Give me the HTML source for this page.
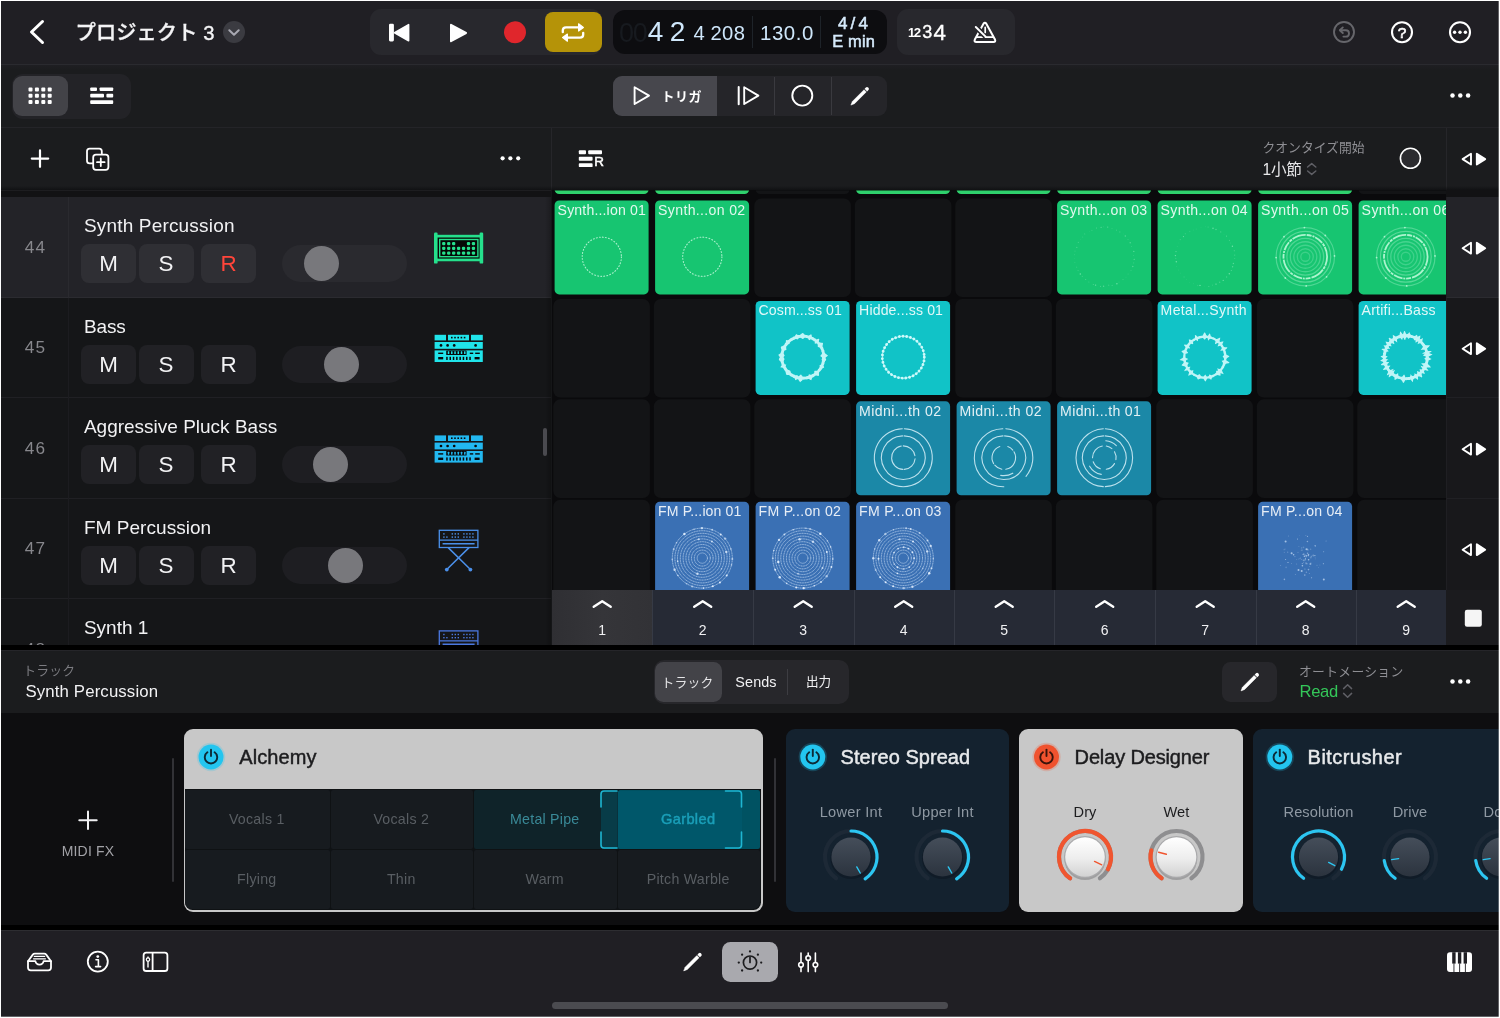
<!DOCTYPE html>
<html lang="ja"><head><meta charset="utf-8"><title>プロジェクト 3</title>
<style>
html,body{margin:0;padding:0;}
body{width:1500px;height:1018px;overflow:hidden;background:#201f24;font-family:"Liberation Sans","Noto Sans CJK JP",sans-serif;-webkit-font-smoothing:antialiased;}
#app{position:relative;width:1500px;height:1018px;overflow:hidden;background:#201f24;will-change:transform;}
.t{will-change:opacity;}
.a{position:absolute;box-sizing:border-box;}
.t{white-space:nowrap;line-height:1.2;}
.j{font-family:"Liberation Sans","Noto Sans CJK JP",sans-serif;}
svg{position:absolute;left:0;top:0;overflow:visible;}
</style></head>
<body>
<div id="app">
<div class="a" style="left:0px;top:0px;width:1500px;height:64px;background:#201f24;"></div>
<div class="a" style="left:0px;top:64px;width:1500px;height:126px;background:#1b1c1e;"></div>
<div class="a" style="left:0;top:64px;width:1500px;height:6px;background:linear-gradient(to bottom,#2a2a2f 0,#2a2a2f 1px,#1e1e22 1.5px,#1b1c1e 6px)"></div>
<div class="a" style="left:0px;top:127px;width:1500px;height:1px;background:#242428;"></div>
<div class="a" style="left:0px;top:190px;width:552px;height:456px;background:#151618;"></div>
<div class="a" style="left:552px;top:190px;width:894px;height:456px;background:#0a0a0c;"></div>
<div class="a" style="left:1446px;top:190px;width:54px;height:456px;background:#17171a;"></div>
<div class="a t j" style="left:75.6px;top:21.0px;font-size:20.2px;color:#f4f4f6;font-weight:500;letter-spacing:0.12px;line-height:24px;-webkit-text-stroke:0.35px #f4f4f6;">プロジェクト 3</div>
<div class="a" style="left:370px;top:9px;width:232px;height:46px;background:#28282d;border-radius:11px;"></div>
<div class="a" style="left:545px;top:12px;width:56.5px;height:40px;background:#b59308;border-radius:8px;"></div>
<div class="a" style="left:613px;top:10px;width:274px;height:44px;background:#0d0d10;border-radius:12px;"></div>
<div class="a t " style="left:619px;top:16.64px;font-size:27px;color:#171a1f;letter-spacing:-1.2px;line-height:32px;">00</div>
<div class="a t " style="left:647.8px;top:15.3px;font-size:28px;color:#cfe7fb;line-height:34px;">4</div>
<div class="a t " style="left:669.8px;top:15.3px;font-size:28px;color:#cfe7fb;line-height:34px;">2</div>
<div class="a t " style="left:693.4px;top:21.0px;font-size:20.2px;color:#cfe7fb;line-height:24px;">4</div>
<div class="a t " style="left:710.4px;top:21.0px;font-size:20.2px;color:#cfe7fb;letter-spacing:0.45px;line-height:24px;">208</div>
<div class="a" style="left:752px;top:16px;width:1px;height:32px;background:#1e2329;"></div>
<div class="a t " style="left:760px;top:20.93px;font-size:20.4px;color:#cfe7fb;letter-spacing:0.55px;line-height:24px;">130.0</div>
<div class="a" style="left:820px;top:16px;width:1px;height:32px;background:#1e2329;"></div>
<div class="a t " style="left:704.6px;top:13.51px;font-size:17px;color:#d6eafb;letter-spacing:3.2px;width:300px;text-align:center;line-height:20px;-webkit-text-stroke:0.5px #d6eafb;">4/4</div>
<div class="a t " style="left:703.6px;top:31.32px;font-size:16.4px;color:#d6eafb;letter-spacing:0.2px;width:300px;text-align:center;line-height:20px;-webkit-text-stroke:0.5px #d6eafb;">E min</div>
<div class="a" style="left:897px;top:9px;width:118px;height:46px;background:#28282d;border-radius:11px;"></div>
<div class="a t" style="left:0;top:0;width:0;height:0;color:#fff"><span class="a" style="left:908.0px;top:25.62px;font-size:12.65px;line-height:15px;font-weight:700;-webkit-text-stroke:0px #fff">1</span><span class="a" style="left:913.8px;top:24.98px;font-size:13.33px;line-height:16px;font-weight:700;-webkit-text-stroke:0px #fff">2</span><span class="a" style="left:922.2px;top:21.48px;font-size:17.96px;line-height:22px;font-weight:400;-webkit-text-stroke:0.4px #fff">3</span><span class="a" style="left:933.4px;top:19.17px;font-size:22.31px;line-height:27px;font-weight:400;-webkit-text-stroke:0.4px #fff">4</span></div>
<div class="a t " style="left:1252px;top:22.73px;font-size:15.5px;color:#fff;width:300px;text-align:center;line-height:19px;-webkit-text-stroke:0.6px #fff;">?</div>
<div class="a" style="left:11.5px;top:73.5px;width:119.5px;height:45px;background:#232327;border-radius:11px;"></div>
<div class="a" style="left:13px;top:75.5px;width:55px;height:40.5px;background:#434348;border-radius:9px;"></div>
<div class="a" style="left:613px;top:76px;width:274px;height:40px;background:#252529;border-radius:9px;"></div>
<div class="a" style="left:613px;top:76px;width:104px;height:40px;background:#47474d;border-radius:9px 0 0 9px"></div>
<div class="a" style="left:774px;top:77px;width:1px;height:38px;background:#3a3a3f;"></div>
<div class="a" style="left:830.5px;top:77px;width:1px;height:38px;background:#3a3a3f;"></div>
<div class="a t j" style="left:661.4px;top:88.9px;font-size:13px;color:#fff;font-weight:700;letter-spacing:0.6px;line-height:16px;">トリガ</div>
<div class="a" style="left:551px;top:128px;width:1px;height:62px;background:#26262a;"></div>
<div class="a t " style="left:594.2px;top:154.36px;font-size:13.4px;color:#fff;line-height:16px;-webkit-text-stroke:0.5px #fff;">R</div>
<div class="a t j" style="left:1262.5px;top:140.26px;font-size:12.8px;color:#8e8e93;line-height:15px;">クオンタイズ開始</div>
<div class="a t j" style="left:1262.5px;top:159.69px;font-size:15.6px;color:#e8e8ea;letter-spacing:-0.2px;line-height:19px;">1小節</div>
<div class="a" style="left:1446px;top:128px;width:1px;height:62px;background:#26262a;"></div>
<div class="a" style="left:0;top:186px;width:1500px;height:4px;background:linear-gradient(to bottom,rgba(10,10,12,0),rgba(10,10,12,0.6))"></div>
<svg width="1500" height="1018" viewBox="0 0 1500 1018" aria-hidden="true"><path d="M42.5 21.5 L31.5 32 L42.5 42.5" fill="none" stroke="#fff" stroke-width="3" stroke-linecap="round" stroke-linejoin="round"/><circle cx="234" cy="32" r="11" fill="#3b3b41"/><path d="M229.3 30.2 L234 34.8 L238.7 30.2" fill="none" stroke="#a9a9b2" stroke-width="2" stroke-linecap="round" stroke-linejoin="round"/><rect x="389" y="23.8" width="4.9" height="17.6" rx="1.3" fill="#fff"/><path d="M408.6 24.6 L408.6 40.8 L394.6 32.7 Z" fill="#fff" stroke="#fff" stroke-width="1.6" stroke-linejoin="round"/><path d="M451 24.8 L466 33 L451 41.2 Z" fill="#fff" stroke="#fff" stroke-width="2" stroke-linejoin="round"/><circle cx="515" cy="32.3" r="11" fill="#e0262c"/><g fill="none" stroke="#fff" stroke-width="2.3" stroke-linecap="round" stroke-linejoin="round"><path d="M562.8 32.2 L562.8 30.6 Q562.8 27.4 566 27.4 L578 27.4"/><path d="M583.2 32.8 L583.2 34.4 Q583.2 37.6 580 37.6 L568 37.6"/></g><g fill="#fff" stroke="#fff" stroke-width="1.2" stroke-linejoin="round"><path d="M578.6 23.8 L583.4 27.4 L578.6 31 Z"/><path d="M567.4 34 L562.6 37.6 L567.4 41.2 Z"/></g><g fill="none" stroke="#fff" stroke-width="2" stroke-linecap="round" stroke-linejoin="round"><path d="M983.5 23.7 Q984.9 21.9 986.3 23.7 L995 39.6 Q996 42 993.4 42 L976.4 42 Q973.8 42 974.8 39.6 Z"/><path d="M976.6 37.2 L993.2 37.2" stroke-width="1.7"/><path d="M977.2 28.4 L985.6 36.6" stroke="#28282d" stroke-width="5" stroke-linecap="butt"/><path d="M975.8 27 L985.6 36.6"/><path d="M985.2 27.4 L985.2 32.4" stroke-width="1.7"/></g><g fill="none" stroke="#66666b" stroke-width="1.9" stroke-linecap="round" stroke-linejoin="round"><circle cx="1344" cy="32" r="10"/><path d="M1340.2 30.2 L1345.8 30.2 Q1349 30.2 1349 33.4 Q1349 36.6 1345.8 36.6 L1343.4 36.6"/><path d="M1342.8 27.4 L1339.8 30.2 L1342.8 33"/></g><circle cx="1402" cy="32.2" r="10" fill="none" stroke="#fff" stroke-width="2.1"/><circle cx="1460" cy="32.2" r="10" fill="none" stroke="#fff" stroke-width="2.1"/><circle cx="1454.6" cy="32.2" r="1.7" fill="#fff"/><circle cx="1460" cy="32.2" r="1.7" fill="#fff"/><circle cx="1465.4" cy="32.2" r="1.7" fill="#fff"/><rect x="28.5" y="87.4" width="4" height="4" rx="1" fill="#fff"/><rect x="34.9" y="87.4" width="4" height="4" rx="1" fill="#fff"/><rect x="41.3" y="87.4" width="4" height="4" rx="1" fill="#fff"/><rect x="47.7" y="87.4" width="4" height="4" rx="1" fill="#fff"/><rect x="28.5" y="93.7" width="4" height="4" rx="1" fill="#fff"/><rect x="34.9" y="93.7" width="4" height="4" rx="1" fill="#fff"/><rect x="41.3" y="93.7" width="4" height="4" rx="1" fill="#fff"/><rect x="47.7" y="93.7" width="4" height="4" rx="1" fill="#fff"/><rect x="28.5" y="100.0" width="4" height="4" rx="1" fill="#fff"/><rect x="34.9" y="100.0" width="4" height="4" rx="1" fill="#fff"/><rect x="41.3" y="100.0" width="4" height="4" rx="1" fill="#fff"/><rect x="47.7" y="100.0" width="4" height="4" rx="1" fill="#fff"/><g fill="#fff"><rect x="90.2" y="87.4" width="6.8" height="3.6" rx="0.9"/><rect x="99.6" y="87.4" width="13.6" height="3.6" rx="0.9"/><rect x="90.2" y="93.8" width="13.8" height="3.6" rx="0.9"/><rect x="106.4" y="93.8" width="6.8" height="3.6" rx="0.9"/><rect x="90.2" y="100.2" width="23" height="3.8" rx="0.9"/></g><path d="M634.6 87.2 L649 95.6 L634.6 104 Z" fill="none" stroke="#fff" stroke-width="1.9" stroke-linejoin="round"/><path d="M738.7 87 L738.7 104.2" stroke="#fff" stroke-width="2" stroke-linecap="round"/><path d="M744.2 87.2 L758.4 95.6 L744.2 104 Z" fill="none" stroke="#fff" stroke-width="1.9" stroke-linejoin="round"/><circle cx="802.3" cy="95.6" r="10" fill="none" stroke="#fff" stroke-width="1.9"/><g transform="translate(850.9 105.10000000000001) rotate(-45) scale(1.0)" fill="#fff"><path d="M0 0 L3.6 -1.55 L20.2 -1.55 L20.2 1.55 L3.6 1.55 Z" stroke="#fff" stroke-width="0.5" stroke-linejoin="round"/><path d="M21.2 -1.8 L23 -1.8 Q24.6 -1.8 24.6 -0.2 L24.6 0.2 Q24.6 1.8 23 1.8 L21.2 1.8 Z"/></g><circle cx="1452.5" cy="95.4" r="2.25" fill="#fff"/><circle cx="1460.3" cy="95.4" r="2.25" fill="#fff"/><circle cx="1468.1" cy="95.4" r="2.25" fill="#fff"/><path d="M40 150.4 L40 166.8 M31.8 158.6 L48.2 158.6" stroke="#fff" stroke-width="2.2" stroke-linecap="round"/><g fill="none" stroke="#fff" stroke-width="1.8" stroke-linejoin="round" stroke-linecap="round"><path d="M92.6 163.4 L89.6 163.4 Q87 163.4 87 160.8 L87 151.2 Q87 148.6 89.6 148.6 L99.2 148.6 Q101.8 148.6 101.8 151.2 L101.8 154"/><rect x="93.2" y="154.6" width="15.2" height="15.2" rx="2.8"/><path d="M100.8 158.4 L100.8 166 M97 162.2 L104.6 162.2"/></g><circle cx="502.6" cy="158.3" r="2.1" fill="#fff"/><circle cx="510.4" cy="158.3" r="2.1" fill="#fff"/><circle cx="518.2" cy="158.3" r="2.1" fill="#fff"/><g fill="#fff"><rect x="578.8" y="150.3" width="7.2" height="3.9" rx="0.9"/><rect x="588.2" y="150.3" width="13.8" height="3.9" rx="0.9"/><rect x="578.8" y="156.8" width="13.8" height="3.9" rx="0.9"/><rect x="578.8" y="163.2" width="13.8" height="3.9" rx="0.9"/></g><path d="M1307.6 167 L1311.7 163.6 L1315.8 167 M1307.6 171 L1311.7 174.4 L1315.8 171" fill="none" stroke="#5f5f65" stroke-width="1.5" stroke-linecap="round" stroke-linejoin="round"/><circle cx="1410.4" cy="158.3" r="10" fill="#2b2b2f" stroke="#fff" stroke-width="1.6"/><path d="M1471.0 153.7 L1471.0 164.5 L1462.6 159.1 Z" fill="none" stroke="#fff" stroke-width="1.9" stroke-linejoin="round"/><path d="M1476.8 153.7 L1476.8 164.5 L1485.2 159.1 Z" fill="#fff" stroke="#fff" stroke-width="1.9" stroke-linejoin="round"/></svg>
<div class="a" style="left:0px;top:190px;width:551px;height:7px;background:#121214;"></div>
<div class="a" style="left:0px;top:190px;width:551px;height:1px;background:#1d1d20;"></div>
<div class="a" style="left:1446px;top:190px;width:54px;height:7px;background:#121214;"></div>
<div class="a" style="left:0;top:190px;width:1500px;height:455px;overflow:hidden">
<div class="a" style="left:0;top:7.0px;width:551px;height:100.5px;background:#232328;border-bottom:1px solid #2b2b30"></div>
<div class="a" style="left:68px;top:7.0px;width:1px;height:100.5px;background:#2a2a2f"></div>
<div class="a" style="left:1446px;top:7.0px;width:54px;height:100.5px;background:#232328;border-bottom:1px solid #2b2b30;border-left:1px solid #1f1f23"></div>
<div class="a t " style="left:1.4px;top:46.94px;font-size:17.2px;color:#87878c;letter-spacing:1.2px;width:68px;text-align:center;line-height:21px;">44</div>
<div class="a t " style="left:83.9px;top:24.32px;font-size:19px;color:#f2f2f4;letter-spacing:0.18px;line-height:23px;">Synth Percussion</div>
<div class="a t" style="left:81px;top:54.0px;width:55px;height:39px;border-radius:8px;background:#2f2f34;color:#f2f2f4;font-size:22.4px;line-height:40px;text-align:center">M</div>
<div class="a t" style="left:138.5px;top:54.0px;width:55px;height:39px;border-radius:8px;background:#2f2f34;color:#f2f2f4;font-size:22.4px;line-height:40px;text-align:center">S</div>
<div class="a t" style="left:201px;top:54.0px;width:55px;height:39px;border-radius:8px;background:#2f2f34;color:#ff453a;font-size:22.4px;line-height:40px;text-align:center">R</div>
<div class="a" style="left:282px;top:55.0px;width:125px;height:37px;border-radius:18.5px;background:#2a2a2f"></div>
<div class="a" style="left:304.0px;top:56.0px;width:35px;height:35px;border-radius:50%;background:#78787c"></div>
<div class="a" style="left:0;top:107.5px;width:551px;height:100.5px;background:#151618;border-bottom:1px solid #202024"></div>
<div class="a" style="left:68px;top:107.5px;width:1px;height:100.5px;background:#1c1c20"></div>
<div class="a" style="left:1446px;top:107.5px;width:54px;height:100.5px;background:#18181b;border-bottom:1px solid #202024;border-left:1px solid #1f1f23"></div>
<div class="a t " style="left:1.4px;top:147.44px;font-size:17.2px;color:#87878c;letter-spacing:1.2px;width:68px;text-align:center;line-height:21px;">45</div>
<div class="a t " style="left:83.9px;top:124.82px;font-size:19px;color:#f2f2f4;letter-spacing:-0.1px;line-height:23px;">Bass</div>
<div class="a t" style="left:81px;top:154.5px;width:55px;height:39px;border-radius:8px;background:#212125;color:#f2f2f4;font-size:22.4px;line-height:40px;text-align:center">M</div>
<div class="a t" style="left:138.5px;top:154.5px;width:55px;height:39px;border-radius:8px;background:#212125;color:#f2f2f4;font-size:22.4px;line-height:40px;text-align:center">S</div>
<div class="a t" style="left:201px;top:154.5px;width:55px;height:39px;border-radius:8px;background:#212125;color:#f2f2f4;font-size:22.4px;line-height:40px;text-align:center">R</div>
<div class="a" style="left:282px;top:155.5px;width:125px;height:37px;border-radius:18.5px;background:#1e1e22"></div>
<div class="a" style="left:324.0px;top:156.5px;width:35px;height:35px;border-radius:50%;background:#78787c"></div>
<div class="a" style="left:0;top:208.0px;width:551px;height:100.5px;background:#151618;border-bottom:1px solid #202024"></div>
<div class="a" style="left:68px;top:208.0px;width:1px;height:100.5px;background:#1c1c20"></div>
<div class="a" style="left:1446px;top:208.0px;width:54px;height:100.5px;background:#18181b;border-bottom:1px solid #202024;border-left:1px solid #1f1f23"></div>
<div class="a t " style="left:1.4px;top:247.94px;font-size:17.2px;color:#87878c;letter-spacing:1.2px;width:68px;text-align:center;line-height:21px;">46</div>
<div class="a t " style="left:83.9px;top:225.32px;font-size:19px;color:#f2f2f4;line-height:23px;">Aggressive Pluck Bass</div>
<div class="a t" style="left:81px;top:255.0px;width:55px;height:39px;border-radius:8px;background:#212125;color:#f2f2f4;font-size:22.4px;line-height:40px;text-align:center">M</div>
<div class="a t" style="left:138.5px;top:255.0px;width:55px;height:39px;border-radius:8px;background:#212125;color:#f2f2f4;font-size:22.4px;line-height:40px;text-align:center">S</div>
<div class="a t" style="left:201px;top:255.0px;width:55px;height:39px;border-radius:8px;background:#212125;color:#f2f2f4;font-size:22.4px;line-height:40px;text-align:center">R</div>
<div class="a" style="left:282px;top:256.0px;width:125px;height:37px;border-radius:18.5px;background:#1e1e22"></div>
<div class="a" style="left:312.5px;top:257.0px;width:35px;height:35px;border-radius:50%;background:#78787c"></div>
<div class="a" style="left:0;top:308.5px;width:551px;height:100.5px;background:#151618;border-bottom:1px solid #202024"></div>
<div class="a" style="left:68px;top:308.5px;width:1px;height:100.5px;background:#1c1c20"></div>
<div class="a" style="left:1446px;top:308.5px;width:54px;height:100.5px;background:#18181b;border-bottom:1px solid #202024;border-left:1px solid #1f1f23"></div>
<div class="a t " style="left:1.4px;top:348.44px;font-size:17.2px;color:#87878c;letter-spacing:1.2px;width:68px;text-align:center;line-height:21px;">47</div>
<div class="a t " style="left:83.9px;top:325.82px;font-size:19px;color:#f2f2f4;letter-spacing:0.05px;line-height:23px;">FM Percussion</div>
<div class="a t" style="left:81px;top:355.5px;width:55px;height:39px;border-radius:8px;background:#212125;color:#f2f2f4;font-size:22.4px;line-height:40px;text-align:center">M</div>
<div class="a t" style="left:138.5px;top:355.5px;width:55px;height:39px;border-radius:8px;background:#212125;color:#f2f2f4;font-size:22.4px;line-height:40px;text-align:center">S</div>
<div class="a t" style="left:201px;top:355.5px;width:55px;height:39px;border-radius:8px;background:#212125;color:#f2f2f4;font-size:22.4px;line-height:40px;text-align:center">R</div>
<div class="a" style="left:282px;top:356.5px;width:125px;height:37px;border-radius:18.5px;background:#1e1e22"></div>
<div class="a" style="left:328.0px;top:357.5px;width:35px;height:35px;border-radius:50%;background:#78787c"></div>
<div class="a" style="left:0;top:409.0px;width:551px;height:100.5px;background:#151618;border-bottom:1px solid #202024"></div>
<div class="a" style="left:68px;top:409.0px;width:1px;height:100.5px;background:#1c1c20"></div>
<div class="a" style="left:1446px;top:409.0px;width:54px;height:100.5px;background:#18181b;border-bottom:1px solid #202024;border-left:1px solid #1f1f23"></div>
<div class="a t " style="left:1.4px;top:448.94px;font-size:17.2px;color:#87878c;letter-spacing:1.2px;width:68px;text-align:center;line-height:21px;">48</div>
<div class="a t " style="left:83.9px;top:426.32px;font-size:19px;color:#f2f2f4;line-height:23px;">Synth 1</div>
<div class="a t" style="left:81px;top:456.0px;width:55px;height:39px;border-radius:8px;background:#212125;color:#f2f2f4;font-size:22.4px;line-height:40px;text-align:center">M</div>
<div class="a t" style="left:138.5px;top:456.0px;width:55px;height:39px;border-radius:8px;background:#212125;color:#f2f2f4;font-size:22.4px;line-height:40px;text-align:center">S</div>
<div class="a t" style="left:201px;top:456.0px;width:55px;height:39px;border-radius:8px;background:#212125;color:#f2f2f4;font-size:22.4px;line-height:40px;text-align:center">R</div>
<div class="a" style="left:282px;top:457.0px;width:125px;height:37px;border-radius:18.5px;background:#1e1e22"></div>
<div class="a" style="left:312.5px;top:458.0px;width:35px;height:35px;border-radius:50%;background:#78787c"></div>
</div>
<div class="a" style="left:545px;top:197px;width:6px;height:448px;background:linear-gradient(to right,rgba(0,0,0,0),rgba(0,0,0,0.22))"></div>
<div class="a" style="left:543px;top:428px;width:4px;height:28px;background:#4a4a4f;border-radius:2px;"></div>
<svg width="1500" height="1018" viewBox="0 0 1500 1018" aria-hidden="true"><defs><clipPath id="trkclip"><rect x="0" y="190" width="1500" height="455"/></clipPath></defs><g clip-path="url(#trkclip)"><rect x="436" y="235" width="45.4" height="26.2" fill="#050806"/><g fill="#25e08c"><rect x="434" y="232.6" width="3.6" height="31" rx="1.2"/><rect x="479.6" y="232.6" width="3.6" height="31" rx="1.2"/><rect x="436" y="234.8" width="45" height="2.7"/><rect x="436" y="258.6" width="45" height="2.7"/></g><rect x="439.7" y="239.5" width="38.2" height="17.2" fill="none" stroke="#25e08c" stroke-width="1.4"/><rect x="442.10" y="241.90" width="3.3" height="3.3" rx="1.2" fill="#25e08c"/><rect x="447.05" y="241.90" width="3.3" height="3.3" rx="1.2" fill="#25e08c"/><rect x="452.00" y="241.90" width="3.3" height="3.3" rx="1.2" fill="#25e08c"/><rect x="466.85" y="241.90" width="3.3" height="3.3" rx="1.2" fill="#25e08c"/><rect x="471.80" y="241.90" width="3.3" height="3.3" rx="1.2" fill="#25e08c"/><rect x="442.10" y="246.65" width="3.3" height="3.3" rx="1.2" fill="#25e08c"/><rect x="447.05" y="246.65" width="3.3" height="3.3" rx="1.2" fill="#25e08c"/><rect x="452.00" y="246.65" width="3.3" height="3.3" rx="1.2" fill="#25e08c"/><rect x="456.95" y="246.65" width="3.3" height="3.3" rx="1.2" fill="#25e08c"/><rect x="461.90" y="246.65" width="3.3" height="3.3" rx="1.2" fill="#25e08c"/><rect x="466.85" y="246.65" width="3.3" height="3.3" rx="1.2" fill="#25e08c"/><rect x="471.80" y="246.65" width="3.3" height="3.3" rx="1.2" fill="#25e08c"/><rect x="442.10" y="251.40" width="3.3" height="3.3" rx="1.2" fill="#25e08c"/><rect x="447.05" y="251.40" width="3.3" height="3.3" rx="1.2" fill="#25e08c"/><rect x="452.00" y="251.40" width="3.3" height="3.3" rx="1.2" fill="#25e08c"/><rect x="456.95" y="251.40" width="3.3" height="3.3" rx="1.2" fill="#25e08c"/><rect x="461.90" y="251.40" width="3.3" height="3.3" rx="1.2" fill="#25e08c"/><rect x="466.85" y="251.40" width="3.3" height="3.3" rx="1.2" fill="#25e08c"/><rect x="471.80" y="251.40" width="3.3" height="3.3" rx="1.2" fill="#25e08c"/><g transform="translate(434.6 334.8)"><g fill="#20e4ea"><rect x="0" y="0" width="11.4" height="5.6"/><rect x="13.4" y="0" width="21" height="5.6"/><rect x="36.4" y="0" width="11.8" height="5.6"/><rect x="0" y="7.2" width="48.2" height="6.8"/><rect x="0" y="15.6" width="48.2" height="11.6"/></g><g fill="#08090b"><rect x="16.4" y="2" width="1.6" height="1.6"/><rect x="19.6" y="2" width="1.6" height="1.6"/><rect x="22.8" y="2" width="1.6" height="1.6"/><rect x="26" y="2" width="1.6" height="1.6"/><rect x="29.2" y="2" width="1.6" height="1.6"/><circle cx="6.4" cy="10.6" r="1.35"/><circle cx="13" cy="10.6" r="1.35"/><circle cx="19.6" cy="10.6" r="1.35"/><circle cx="41" cy="10.6" r="1.35"/><rect x="3.6" y="17.8" width="5" height="1.4"/><rect x="3.6" y="22.2" width="5" height="2.4"/><rect x="40" y="22.2" width="5" height="2.4"/><rect x="35.2" y="17.8" width="3.4" height="1.4"/><rect x="40.6" y="17.8" width="4.6" height="1.4"/><rect x="11.6" y="15.6" width="20.4" height="4.6" rx="0.6"/><rect x="11.6" y="22" width="1.5" height="3.2"/><rect x="14.9" y="22" width="1.5" height="3.2"/><rect x="18.2" y="22" width="1.5" height="3.2"/><rect x="21.5" y="22" width="1.5" height="3.2"/><rect x="24.8" y="22" width="1.5" height="3.2"/><rect x="28.1" y="22" width="1.5" height="3.2"/><rect x="31.4" y="22" width="1.5" height="3.2"/><rect x="34.7" y="22" width="1.5" height="3.2"/></g><g fill="#20e4ea"><rect x="13.20" y="16.4" width="1.5" height="2.9" rx="0.4"/><rect x="16.45" y="16.4" width="1.5" height="2.9" rx="0.4"/><rect x="19.70" y="16.4" width="1.5" height="2.9" rx="0.4"/><rect x="22.95" y="16.4" width="1.5" height="2.9" rx="0.4"/><rect x="26.20" y="16.4" width="1.5" height="2.9" rx="0.4"/><rect x="29.45" y="16.4" width="1.5" height="2.9" rx="0.4"/></g></g><g transform="translate(434.6 435.4)"><g fill="#22b8f0"><rect x="0" y="0" width="11.4" height="5.6"/><rect x="13.4" y="0" width="21" height="5.6"/><rect x="36.4" y="0" width="11.8" height="5.6"/><rect x="0" y="7.2" width="48.2" height="6.8"/><rect x="0" y="15.6" width="48.2" height="11.6"/></g><g fill="#08090b"><rect x="16.4" y="2" width="1.6" height="1.6"/><rect x="19.6" y="2" width="1.6" height="1.6"/><rect x="22.8" y="2" width="1.6" height="1.6"/><rect x="26" y="2" width="1.6" height="1.6"/><rect x="29.2" y="2" width="1.6" height="1.6"/><circle cx="6.4" cy="10.6" r="1.35"/><circle cx="13" cy="10.6" r="1.35"/><circle cx="19.6" cy="10.6" r="1.35"/><circle cx="41" cy="10.6" r="1.35"/><rect x="3.6" y="17.8" width="5" height="1.4"/><rect x="3.6" y="22.2" width="5" height="2.4"/><rect x="40" y="22.2" width="5" height="2.4"/><rect x="35.2" y="17.8" width="3.4" height="1.4"/><rect x="40.6" y="17.8" width="4.6" height="1.4"/><rect x="11.6" y="15.6" width="20.4" height="4.6" rx="0.6"/><rect x="11.6" y="22" width="1.5" height="3.2"/><rect x="14.9" y="22" width="1.5" height="3.2"/><rect x="18.2" y="22" width="1.5" height="3.2"/><rect x="21.5" y="22" width="1.5" height="3.2"/><rect x="24.8" y="22" width="1.5" height="3.2"/><rect x="28.1" y="22" width="1.5" height="3.2"/><rect x="31.4" y="22" width="1.5" height="3.2"/><rect x="34.7" y="22" width="1.5" height="3.2"/></g><g fill="#22b8f0"><rect x="13.20" y="16.4" width="1.5" height="2.9" rx="0.4"/><rect x="16.45" y="16.4" width="1.5" height="2.9" rx="0.4"/><rect x="19.70" y="16.4" width="1.5" height="2.9" rx="0.4"/><rect x="22.95" y="16.4" width="1.5" height="2.9" rx="0.4"/><rect x="26.20" y="16.4" width="1.5" height="2.9" rx="0.4"/><rect x="29.45" y="16.4" width="1.5" height="2.9" rx="0.4"/></g></g><g transform="translate(438.6 529.6)" fill="none" stroke="#4b90ea" stroke-width="1.3"><rect x="0.7" y="0.7" width="38.6" height="17.2"/><path d="M0.7 10.6 L39.3 10.6"/><path d="M4 14.2 L36 14.2" stroke-width="1.6"/><g stroke="none" fill="#4b90ea"><rect x="4.6" y="3.6" width="1.4" height="1.4"/><rect x="13" y="3.6" width="1.4" height="1.4"/><rect x="16" y="3.6" width="1.4" height="1.4"/><rect x="19" y="3.6" width="1.4" height="1.4"/><rect x="24.6" y="3.6" width="1.4" height="1.4"/><rect x="27.6" y="3.6" width="1.4" height="1.4"/><rect x="30.6" y="3.6" width="1.4" height="1.4"/><rect x="33.6" y="3.6" width="1.4" height="1.4"/><rect x="4.6" y="6.8" width="1.4" height="1.4"/><rect x="7.6" y="6.8" width="1.4" height="1.4"/><rect x="13" y="6.8" width="1.4" height="1.4"/><rect x="16" y="6.8" width="1.4" height="1.4"/><rect x="19" y="6.8" width="1.4" height="1.4"/><rect x="24.6" y="6.8" width="1.4" height="1.4"/><rect x="27.6" y="6.8" width="1.4" height="1.4"/><rect x="30.6" y="6.8" width="1.4" height="1.4"/><rect x="33.6" y="6.8" width="1.4" height="1.4"/></g><path d="M9.6 18 L31.6 39.6 M30.4 18 L8.4 39.6" stroke-width="1.5"/><circle cx="8.2" cy="40" r="1.9" fill="#4b90ea" stroke="none"/><circle cx="31.8" cy="40" r="1.9" fill="#4b90ea" stroke="none"/></g><g transform="translate(438.6 630.2)" fill="none" stroke="#4b78e0" stroke-width="1.3"><rect x="0.7" y="0.7" width="38.6" height="17.2"/><path d="M0.7 10.6 L39.3 10.6"/><path d="M4 14.2 L36 14.2" stroke-width="1.6"/><g stroke="none" fill="#4b78e0"><rect x="4.6" y="3.6" width="1.4" height="1.4"/><rect x="13" y="3.6" width="1.4" height="1.4"/><rect x="16" y="3.6" width="1.4" height="1.4"/><rect x="19" y="3.6" width="1.4" height="1.4"/><rect x="24.6" y="3.6" width="1.4" height="1.4"/><rect x="27.6" y="3.6" width="1.4" height="1.4"/><rect x="30.6" y="3.6" width="1.4" height="1.4"/><rect x="33.6" y="3.6" width="1.4" height="1.4"/><rect x="4.6" y="6.8" width="1.4" height="1.4"/><rect x="7.6" y="6.8" width="1.4" height="1.4"/><rect x="13" y="6.8" width="1.4" height="1.4"/><rect x="16" y="6.8" width="1.4" height="1.4"/><rect x="19" y="6.8" width="1.4" height="1.4"/><rect x="24.6" y="6.8" width="1.4" height="1.4"/><rect x="27.6" y="6.8" width="1.4" height="1.4"/><rect x="30.6" y="6.8" width="1.4" height="1.4"/><rect x="33.6" y="6.8" width="1.4" height="1.4"/></g><path d="M9.6 18 L31.6 39.6 M30.4 18 L8.4 39.6" stroke-width="1.5"/><circle cx="8.2" cy="40" r="1.9" fill="#4b78e0" stroke="none"/><circle cx="31.8" cy="40" r="1.9" fill="#4b78e0" stroke="none"/></g></g><path d="M1471.0 242.8 L1471.0 253.6 L1462.6 248.2 Z" fill="none" stroke="#fff" stroke-width="1.9" stroke-linejoin="round"/><path d="M1476.8 242.8 L1476.8 253.6 L1485.2 248.2 Z" fill="#fff" stroke="#fff" stroke-width="1.9" stroke-linejoin="round"/><path d="M1471.0 343.3 L1471.0 354.1 L1462.6 348.7 Z" fill="none" stroke="#fff" stroke-width="1.9" stroke-linejoin="round"/><path d="M1476.8 343.3 L1476.8 354.1 L1485.2 348.7 Z" fill="#fff" stroke="#fff" stroke-width="1.9" stroke-linejoin="round"/><path d="M1471.0 443.8 L1471.0 454.6 L1462.6 449.2 Z" fill="none" stroke="#fff" stroke-width="1.9" stroke-linejoin="round"/><path d="M1476.8 443.8 L1476.8 454.6 L1485.2 449.2 Z" fill="#fff" stroke="#fff" stroke-width="1.9" stroke-linejoin="round"/><path d="M1471.0 544.3 L1471.0 555.1 L1462.6 549.7 Z" fill="none" stroke="#fff" stroke-width="1.9" stroke-linejoin="round"/><path d="M1476.8 544.3 L1476.8 555.1 L1485.2 549.7 Z" fill="#fff" stroke="#fff" stroke-width="1.9" stroke-linejoin="round"/></svg>
<svg width="1500" height="1018" viewBox="0 0 1500 1018" aria-hidden="true"><defs><clipPath id="cellclip"><rect x="552" y="190.6" width="894" height="399.4"/></clipPath></defs><g clip-path="url(#cellclip)"><rect x="554.60" y="100.00" width="94.0" height="94.0" rx="4.6" fill="#2fd16d"/><rect x="655.10" y="100.00" width="94.0" height="94.0" rx="4.6" fill="#2fd16d"/><rect x="755.60" y="100.00" width="94.0" height="94.0" rx="4.6" fill="#131416"/><rect x="856.10" y="100.00" width="94.0" height="94.0" rx="4.6" fill="#2fd16d"/><rect x="956.60" y="100.00" width="94.0" height="94.0" rx="4.6" fill="#2fd16d"/><rect x="1057.10" y="100.00" width="94.0" height="94.0" rx="4.6" fill="#2fd16d"/><rect x="1157.60" y="100.00" width="94.0" height="94.0" rx="4.6" fill="#2fd16d"/><rect x="1258.10" y="100.00" width="94.0" height="94.0" rx="4.6" fill="#2fd16d"/><rect x="1358.60" y="100.00" width="94.0" height="94.0" rx="4.6" fill="#131416"/><rect x="554.60" y="200.45" width="94.0" height="94.0" rx="4.6" fill="#17c571"/><rect x="655.10" y="200.45" width="94.0" height="94.0" rx="4.6" fill="#17c571"/><rect x="754.30" y="198.45" width="96.6" height="98.6" rx="7" fill="#131416"/><rect x="854.80" y="198.45" width="96.6" height="98.6" rx="7" fill="#131416"/><rect x="955.30" y="198.45" width="96.6" height="98.6" rx="7" fill="#131416"/><rect x="1057.10" y="200.45" width="94.0" height="94.0" rx="4.6" fill="#17c571"/><rect x="1157.60" y="200.45" width="94.0" height="94.0" rx="4.6" fill="#17c571"/><rect x="1258.10" y="200.45" width="94.0" height="94.0" rx="4.6" fill="#17c571"/><rect x="1358.60" y="200.45" width="94.0" height="94.0" rx="4.6" fill="#17c571"/><rect x="553.30" y="298.90" width="96.6" height="98.6" rx="7" fill="#131416"/><rect x="653.80" y="298.90" width="96.6" height="98.6" rx="7" fill="#131416"/><rect x="755.60" y="300.90" width="94.0" height="94.0" rx="4.6" fill="#11c3c7"/><rect x="856.10" y="300.90" width="94.0" height="94.0" rx="4.6" fill="#11c3c7"/><rect x="955.30" y="298.90" width="96.6" height="98.6" rx="7" fill="#131416"/><rect x="1055.80" y="298.90" width="96.6" height="98.6" rx="7" fill="#131416"/><rect x="1157.60" y="300.90" width="94.0" height="94.0" rx="4.6" fill="#11c3c7"/><rect x="1256.80" y="298.90" width="96.6" height="98.6" rx="7" fill="#131416"/><rect x="1358.60" y="300.90" width="94.0" height="94.0" rx="4.6" fill="#11c3c7"/><rect x="553.30" y="399.35" width="96.6" height="98.6" rx="7" fill="#131416"/><rect x="653.80" y="399.35" width="96.6" height="98.6" rx="7" fill="#131416"/><rect x="754.30" y="399.35" width="96.6" height="98.6" rx="7" fill="#131416"/><rect x="856.10" y="401.35" width="94.0" height="94.0" rx="4.6" fill="#1b88a7"/><rect x="956.60" y="401.35" width="94.0" height="94.0" rx="4.6" fill="#1b88a7"/><rect x="1057.10" y="401.35" width="94.0" height="94.0" rx="4.6" fill="#1b88a7"/><rect x="1156.30" y="399.35" width="96.6" height="98.6" rx="7" fill="#131416"/><rect x="1256.80" y="399.35" width="96.6" height="98.6" rx="7" fill="#131416"/><rect x="1357.30" y="399.35" width="96.6" height="98.6" rx="7" fill="#131416"/><rect x="553.30" y="499.80" width="96.6" height="98.6" rx="7" fill="#131416"/><rect x="655.10" y="501.80" width="94.0" height="94.0" rx="4.6" fill="#3a70b4"/><rect x="755.60" y="501.80" width="94.0" height="94.0" rx="4.6" fill="#3a70b4"/><rect x="856.10" y="501.80" width="94.0" height="94.0" rx="4.6" fill="#3a70b4"/><rect x="955.30" y="499.80" width="96.6" height="98.6" rx="7" fill="#131416"/><rect x="1055.80" y="499.80" width="96.6" height="98.6" rx="7" fill="#131416"/><rect x="1156.30" y="499.80" width="96.6" height="98.6" rx="7" fill="#131416"/><rect x="1258.10" y="501.80" width="94.0" height="94.0" rx="4.6" fill="#3a70b4"/><rect x="1357.30" y="499.80" width="96.6" height="98.6" rx="7" fill="#131416"/></g></svg>
<div class="a" style="left:552px;top:190px;width:894px;height:400px;overflow:hidden">
<div class="a t" style="left:5.60px;top:11.70px;font-size:14.1px;line-height:17px;color:rgba(255,255,255,0.88);letter-spacing:0.154px">Synth...ion 01</div>
<div class="a t" style="left:106.10px;top:11.70px;font-size:14.1px;line-height:17px;color:rgba(255,255,255,0.88);letter-spacing:0.333px">Synth...on 02</div>
<div class="a t" style="left:508.10px;top:11.70px;font-size:14.1px;line-height:17px;color:rgba(255,255,255,0.88);letter-spacing:0.333px">Synth...on 03</div>
<div class="a t" style="left:608.60px;top:11.70px;font-size:14.1px;line-height:17px;color:rgba(255,255,255,0.88);letter-spacing:0.333px">Synth...on 04</div>
<div class="a t" style="left:709.10px;top:11.70px;font-size:14.1px;line-height:17px;color:rgba(255,255,255,0.88);letter-spacing:0.400px">Synth...on 05</div>
<div class="a t" style="left:809.60px;top:11.70px;font-size:14.1px;line-height:17px;color:rgba(255,255,255,0.88);letter-spacing:0.400px">Synth...on 06</div>
<div class="a t" style="left:206.60px;top:112.15px;font-size:14.1px;line-height:17px;color:rgba(255,255,255,0.88);letter-spacing:0.091px">Cosm...ss 01</div>
<div class="a t" style="left:307.10px;top:112.15px;font-size:14.1px;line-height:17px;color:rgba(255,255,255,0.88);letter-spacing:0.133px">Hidde...ss 01</div>
<div class="a t" style="left:608.60px;top:112.15px;font-size:14.1px;line-height:17px;color:rgba(255,255,255,0.88);letter-spacing:0.317px">Metal...Synth</div>
<div class="a t" style="left:809.60px;top:112.15px;font-size:14.1px;line-height:17px;color:rgba(255,255,255,0.88);letter-spacing:0.217px">Artifi...Bass</div>
<div class="a t" style="left:307.10px;top:212.60px;font-size:14.1px;line-height:17px;color:rgba(255,255,255,0.88);letter-spacing:0.433px">Midni...th 02</div>
<div class="a t" style="left:407.60px;top:212.60px;font-size:14.1px;line-height:17px;color:rgba(255,255,255,0.88);letter-spacing:0.433px">Midni...th 02</div>
<div class="a t" style="left:508.10px;top:212.60px;font-size:14.1px;line-height:17px;color:rgba(255,255,255,0.88);letter-spacing:0.333px">Midni...th 01</div>
<div class="a t" style="left:106.10px;top:313.05px;font-size:14.1px;line-height:17px;color:rgba(255,255,255,0.88);letter-spacing:0.100px">FM P...ion 01</div>
<div class="a t" style="left:206.60px;top:313.05px;font-size:14.1px;line-height:17px;color:rgba(255,255,255,0.88);letter-spacing:0.318px">FM P...on 02</div>
<div class="a t" style="left:307.10px;top:313.05px;font-size:14.1px;line-height:17px;color:rgba(255,255,255,0.88);letter-spacing:0.318px">FM P...on 03</div>
<div class="a t" style="left:709.10px;top:313.05px;font-size:14.1px;line-height:17px;color:rgba(255,255,255,0.88);letter-spacing:0.227px">FM P...on 04</div>
</div>
<svg width="1500" height="1018" viewBox="0 0 1500 1018" aria-hidden="true"><defs><clipPath id="gridclip"><rect x="552" y="190" width="894" height="400"/></clipPath></defs><g clip-path="url(#gridclip)" fill="none"><circle cx="601.8000000000001" cy="256.75" r="19.6" stroke="#d9ffe9" stroke-opacity="0.75" stroke-width="1.1" stroke-dasharray="0.9 2.18" stroke-linecap="round"/><circle cx="702.3000000000001" cy="256.75" r="19.6" stroke="#d9ffe9" stroke-opacity="0.75" stroke-width="1.1" stroke-dasharray="0.9 2.18" stroke-linecap="round"/><g fill="#c8ffe0"><circle cx="1103.6" cy="226.8" r="0.55" fill-opacity="0.12"/><circle cx="1107.7" cy="227.1" r="0.70" fill-opacity="0.35"/><circle cx="1112.0" cy="228.6" r="0.45" fill-opacity="0.35"/><circle cx="1116.6" cy="230.1" r="0.45" fill-opacity="0.5"/><circle cx="1119.8" cy="232.0" r="0.70" fill-opacity="0.18"/><circle cx="1123.8" cy="234.0" r="0.45" fill-opacity="0.12"/><circle cx="1125.3" cy="236.0" r="0.70" fill-opacity="0.35"/><circle cx="1128.0" cy="239.4" r="0.70" fill-opacity="0.12"/><circle cx="1130.2" cy="242.8" r="0.70" fill-opacity="0.35"/><circle cx="1131.6" cy="246.5" r="0.55" fill-opacity="0.18"/><circle cx="1133.8" cy="251.4" r="0.70" fill-opacity="0.35"/><circle cx="1133.3" cy="255.5" r="0.45" fill-opacity="0.25"/><circle cx="1134.2" cy="259.2" r="0.55" fill-opacity="0.5"/><circle cx="1133.7" cy="262.9" r="0.55" fill-opacity="0.18"/><circle cx="1132.8" cy="266.5" r="0.70" fill-opacity="0.35"/><circle cx="1131.0" cy="270.3" r="0.45" fill-opacity="0.35"/><circle cx="1128.1" cy="274.0" r="0.55" fill-opacity="0.18"/><circle cx="1126.0" cy="277.1" r="0.45" fill-opacity="0.25"/><circle cx="1123.0" cy="279.6" r="0.70" fill-opacity="0.18"/><circle cx="1119.0" cy="282.1" r="0.55" fill-opacity="0.12"/><circle cx="1116.9" cy="283.7" r="0.70" fill-opacity="0.5"/><circle cx="1112.2" cy="285.4" r="0.70" fill-opacity="0.18"/><circle cx="1108.7" cy="285.3" r="0.70" fill-opacity="0.18"/><circle cx="1103.6" cy="286.3" r="0.70" fill-opacity="0.35"/><circle cx="1100.5" cy="286.4" r="0.55" fill-opacity="0.25"/><circle cx="1095.6" cy="285.1" r="0.70" fill-opacity="0.5"/><circle cx="1093.2" cy="284.5" r="0.45" fill-opacity="0.5"/><circle cx="1088.9" cy="282.0" r="0.45" fill-opacity="0.35"/><circle cx="1085.8" cy="279.5" r="0.45" fill-opacity="0.5"/><circle cx="1082.3" cy="276.2" r="0.55" fill-opacity="0.25"/><circle cx="1080.3" cy="274.0" r="0.70" fill-opacity="0.5"/><circle cx="1078.1" cy="270.6" r="0.70" fill-opacity="0.18"/><circle cx="1076.6" cy="267.2" r="0.70" fill-opacity="0.12"/><circle cx="1074.9" cy="262.3" r="0.45" fill-opacity="0.25"/><circle cx="1074.6" cy="258.2" r="0.45" fill-opacity="0.12"/><circle cx="1074.6" cy="254.8" r="0.45" fill-opacity="0.25"/><circle cx="1075.0" cy="251.1" r="0.55" fill-opacity="0.18"/><circle cx="1076.8" cy="247.4" r="0.70" fill-opacity="0.25"/><circle cx="1078.3" cy="242.4" r="0.55" fill-opacity="0.25"/><circle cx="1080.4" cy="239.4" r="0.45" fill-opacity="0.12"/><circle cx="1082.7" cy="237.0" r="0.55" fill-opacity="0.18"/><circle cx="1084.8" cy="233.9" r="0.45" fill-opacity="0.5"/><circle cx="1089.7" cy="231.2" r="0.45" fill-opacity="0.12"/><circle cx="1091.9" cy="230.4" r="0.55" fill-opacity="0.18"/><circle cx="1096.6" cy="228.0" r="0.45" fill-opacity="0.5"/><circle cx="1101.1" cy="227.3" r="0.55" fill-opacity="0.5"/></g><g fill="#c8ffe0"><circle cx="1205.6" cy="226.7" r="0.45" fill-opacity="0.12"/><circle cx="1208.1" cy="227.0" r="0.55" fill-opacity="0.25"/><circle cx="1213.0" cy="228.3" r="0.70" fill-opacity="0.5"/><circle cx="1216.0" cy="229.5" r="0.70" fill-opacity="0.35"/><circle cx="1220.7" cy="231.9" r="0.70" fill-opacity="0.25"/><circle cx="1224.0" cy="234.4" r="0.45" fill-opacity="0.12"/><circle cx="1226.6" cy="236.1" r="0.55" fill-opacity="0.35"/><circle cx="1229.3" cy="240.3" r="0.45" fill-opacity="0.5"/><circle cx="1230.3" cy="243.0" r="0.45" fill-opacity="0.25"/><circle cx="1232.4" cy="246.3" r="0.70" fill-opacity="0.5"/><circle cx="1234.3" cy="250.7" r="0.55" fill-opacity="0.35"/><circle cx="1234.7" cy="255.1" r="0.70" fill-opacity="0.25"/><circle cx="1234.8" cy="258.5" r="0.45" fill-opacity="0.35"/><circle cx="1233.4" cy="263.5" r="0.70" fill-opacity="0.35"/><circle cx="1232.6" cy="266.7" r="0.70" fill-opacity="0.35"/><circle cx="1231.3" cy="270.5" r="0.55" fill-opacity="0.35"/><circle cx="1229.3" cy="273.7" r="0.70" fill-opacity="0.5"/><circle cx="1226.6" cy="277.0" r="0.70" fill-opacity="0.25"/><circle cx="1223.2" cy="280.4" r="0.55" fill-opacity="0.5"/><circle cx="1219.7" cy="282.2" r="0.70" fill-opacity="0.25"/><circle cx="1216.0" cy="284.1" r="0.70" fill-opacity="0.5"/><circle cx="1212.5" cy="285.1" r="0.55" fill-opacity="0.18"/><circle cx="1208.9" cy="286.5" r="0.45" fill-opacity="0.5"/><circle cx="1204.3" cy="286.1" r="0.45" fill-opacity="0.12"/><circle cx="1200.0" cy="285.4" r="0.70" fill-opacity="0.5"/><circle cx="1197.6" cy="285.5" r="0.70" fill-opacity="0.12"/><circle cx="1193.7" cy="283.8" r="0.45" fill-opacity="0.18"/><circle cx="1189.5" cy="282.2" r="0.45" fill-opacity="0.12"/><circle cx="1186.6" cy="279.5" r="0.45" fill-opacity="0.12"/><circle cx="1184.1" cy="277.0" r="0.70" fill-opacity="0.12"/><circle cx="1180.4" cy="273.1" r="0.45" fill-opacity="0.18"/><circle cx="1178.4" cy="270.0" r="0.55" fill-opacity="0.12"/><circle cx="1176.6" cy="266.6" r="0.45" fill-opacity="0.18"/><circle cx="1176.3" cy="261.8" r="0.70" fill-opacity="0.5"/><circle cx="1175.8" cy="258.3" r="0.55" fill-opacity="0.25"/><circle cx="1175.4" cy="255.6" r="0.70" fill-opacity="0.5"/><circle cx="1176.0" cy="251.6" r="0.70" fill-opacity="0.35"/><circle cx="1177.2" cy="246.5" r="0.45" fill-opacity="0.18"/><circle cx="1178.9" cy="243.0" r="0.45" fill-opacity="0.12"/><circle cx="1180.3" cy="239.6" r="0.70" fill-opacity="0.18"/><circle cx="1183.4" cy="236.6" r="0.55" fill-opacity="0.5"/><circle cx="1185.3" cy="233.8" r="0.55" fill-opacity="0.25"/><circle cx="1189.7" cy="231.5" r="0.70" fill-opacity="0.12"/><circle cx="1193.3" cy="230.0" r="0.55" fill-opacity="0.12"/><circle cx="1196.2" cy="229.0" r="0.55" fill-opacity="0.12"/><circle cx="1201.0" cy="227.5" r="0.45" fill-opacity="0.12"/></g><g stroke="#d2ffe6"><circle cx="1305.3" cy="256.75" r="4.5" stroke-opacity="0.2" stroke-width="1.3"/><circle cx="1305.3" cy="256.75" r="8" stroke-opacity="0.22" stroke-width="1.3"/><circle cx="1305.3" cy="256.75" r="11.5" stroke-opacity="0.24" stroke-width="1.3"/><circle cx="1305.3" cy="256.75" r="15" stroke-opacity="0.26" stroke-width="1.3"/><circle cx="1305.3" cy="256.75" r="18.4" stroke-opacity="0.3" stroke-width="1.3"/><circle cx="1305.3" cy="256.75" r="25.4" stroke-opacity="0.34" stroke-width="1.2"/><circle cx="1305.3" cy="256.75" r="29.2" stroke-opacity="0.3" stroke-width="1.2"/><circle cx="1305.3" cy="256.75" r="21.8" stroke-opacity="0.8" stroke-width="1.8" stroke-dasharray="9 0.9 3 0.8 14 1 5 0.9 2 0.8" stroke-linecap="butt"/></g><g fill="#d2ffe6" fill-opacity="0.7"><circle cx="1304.4" cy="227.6" r="0.9"/><circle cx="1325.3" cy="235.5" r="0.9"/><circle cx="1334.5" cy="255.9" r="0.9"/><circle cx="1326.6" cy="276.8" r="0.9"/><circle cx="1306.2" cy="285.9" r="0.9"/><circle cx="1285.3" cy="278.0" r="0.9"/><circle cx="1276.1" cy="257.6" r="0.9"/><circle cx="1284.0" cy="236.7" r="0.9"/></g><g stroke="#d2ffe6"><circle cx="1405.8" cy="256.75" r="4.5" stroke-opacity="0.2" stroke-width="1.3"/><circle cx="1405.8" cy="256.75" r="8" stroke-opacity="0.22" stroke-width="1.3"/><circle cx="1405.8" cy="256.75" r="11.5" stroke-opacity="0.24" stroke-width="1.3"/><circle cx="1405.8" cy="256.75" r="15" stroke-opacity="0.26" stroke-width="1.3"/><circle cx="1405.8" cy="256.75" r="18.4" stroke-opacity="0.3" stroke-width="1.3"/><circle cx="1405.8" cy="256.75" r="25.4" stroke-opacity="0.34" stroke-width="1.2"/><circle cx="1405.8" cy="256.75" r="29.2" stroke-opacity="0.3" stroke-width="1.2"/><circle cx="1405.8" cy="256.75" r="21.8" stroke-opacity="0.8" stroke-width="1.8" stroke-dasharray="9 0.9 3 0.8 14 1 5 0.9 2 0.8" stroke-linecap="butt"/></g><g fill="#d2ffe6" fill-opacity="0.7"><circle cx="1404.9" cy="227.6" r="0.9"/><circle cx="1425.8" cy="235.5" r="0.9"/><circle cx="1435.0" cy="255.9" r="0.9"/><circle cx="1427.1" cy="276.8" r="0.9"/><circle cx="1406.7" cy="285.9" r="0.9"/><circle cx="1385.8" cy="278.0" r="0.9"/><circle cx="1376.6" cy="257.6" r="0.9"/><circle cx="1384.5" cy="236.7" r="0.9"/></g><path d="M802.8 332.9 L803.6 333.4 L804.4 334.4 L805.2 334.8 L805.9 335.1 L806.7 335.1 L807.5 335.3 L808.2 335.5 L809.0 335.4 L810.1 334.7 L811.2 334.2 L811.7 335.2 L811.9 336.7 L812.6 337.0 L813.4 337.2 L814.1 337.7 L814.6 338.3 L815.5 338.4 L816.0 339.1 L816.7 339.5 L818.2 338.8 L819.3 338.9 L819.0 340.5 L818.9 341.7 L819.4 342.3 L820.2 342.6 L821.3 342.8 L822.6 342.8 L823.1 343.5 L822.8 344.7 L822.6 345.8 L822.6 346.7 L823.0 347.3 L823.4 348.0 L823.5 348.8 L823.8 349.6 L824.3 350.2 L824.5 351.0 L824.5 351.8 L824.7 352.5 L825.0 353.3 L826.0 353.9 L826.9 354.7 L828.0 355.4 L827.0 356.4 L825.9 357.2 L825.5 358.0 L825.9 358.8 L826.2 359.7 L825.9 360.5 L825.1 361.1 L824.9 361.9 L824.5 362.6 L824.5 363.4 L824.2 364.2 L823.9 364.9 L823.5 365.6 L823.9 366.6 L824.2 367.6 L823.3 368.1 L822.3 368.4 L822.0 369.2 L821.5 369.8 L820.9 370.4 L820.6 371.1 L819.9 371.6 L819.4 372.1 L818.9 372.8 L819.0 374.0 L819.0 375.2 L818.6 376.0 L817.3 375.8 L816.1 375.5 L815.3 375.7 L814.7 376.2 L814.1 376.8 L813.4 377.2 L812.7 377.4 L812.1 378.1 L811.7 379.3 L811.2 380.3 L810.1 379.7 L809.0 379.0 L808.3 379.1 L807.5 379.3 L806.7 379.5 L805.9 379.3 L805.2 379.6 L804.4 379.6 L803.6 379.7 L802.8 379.6 L802.0 380.7 L801.1 381.3 L800.2 382.3 L799.4 381.3 L798.7 380.3 L798.1 379.3 L797.3 379.3 L796.3 379.8 L795.3 380.2 L794.9 379.0 L794.3 378.1 L793.6 377.9 L792.9 377.5 L792.3 377.0 L791.5 376.8 L790.8 376.4 L790.2 375.9 L789.6 375.4 L788.9 375.0 L787.8 375.1 L786.7 375.0 L786.2 374.4 L785.9 373.5 L785.7 372.6 L785.5 371.7 L785.0 371.1 L784.6 370.4 L784.1 369.8 L783.7 369.1 L783.4 368.4 L782.8 367.8 L781.4 367.6 L780.2 367.3 L781.4 365.8 L781.6 364.9 L781.4 364.1 L781.3 363.4 L780.9 362.7 L780.8 361.9 L780.2 361.2 L779.4 360.5 L778.9 359.7 L778.9 358.9 L779.4 358.0 L779.9 357.2 L779.4 356.4 L778.6 355.5 L778.5 354.6 L779.5 353.9 L780.5 353.3 L780.7 352.5 L781.1 351.8 L781.1 351.0 L781.5 350.3 L781.4 349.4 L781.0 348.4 L780.8 347.4 L781.1 346.6 L782.2 346.2 L783.0 345.8 L783.8 345.3 L784.3 344.7 L784.6 344.0 L785.0 343.3 L785.5 342.7 L785.9 342.0 L785.8 340.8 L786.3 340.1 L787.5 340.2 L788.4 340.0 L789.0 339.6 L789.6 339.1 L790.2 338.6 L790.9 338.1 L791.6 337.7 L792.3 337.4 L792.9 336.9 L793.6 336.5 L794.4 336.4 L795.0 335.8 L795.6 335.0 L796.2 334.1 L797.2 334.8 L798.1 335.0 L798.9 335.0 L799.7 335.0 L800.4 334.5 L801.2 334.0 L802.0 333.2 Z M802.2 338.7 L801.5 338.2 L800.8 338.0 L800.1 337.8 L799.4 338.0 L798.8 338.3 L798.2 338.7 L797.7 339.5 L797.0 339.2 L796.2 339.0 L795.5 339.1 L794.9 339.5 L794.3 339.8 L793.6 339.9 L793.0 340.3 L792.5 340.7 L791.9 341.0 L791.3 341.3 L790.7 341.8 L790.2 342.2 L789.8 342.8 L789.7 343.6 L789.3 344.1 L788.4 344.2 L787.9 344.7 L787.5 345.3 L787.0 345.7 L786.5 346.2 L786.2 346.8 L786.2 347.6 L786.2 348.4 L786.6 349.3 L786.3 349.8 L785.5 350.2 L784.7 350.6 L784.1 351.1 L784.1 351.8 L783.8 352.5 L783.8 353.2 L783.7 353.8 L784.1 354.6 L784.7 355.3 L784.4 355.9 L783.9 356.5 L783.6 357.2 L783.9 357.9 L784.3 358.5 L784.5 359.1 L784.3 359.8 L783.9 360.5 L783.7 361.3 L783.9 361.9 L783.9 362.6 L784.2 363.2 L784.5 363.9 L785.0 364.4 L786.3 364.6 L785.9 365.4 L785.7 366.3 L785.9 367.0 L786.3 367.5 L786.7 368.1 L787.0 368.7 L787.5 369.2 L787.9 369.7 L788.6 370.0 L789.3 370.3 L789.9 370.5 L790.5 370.9 L790.6 371.7 L790.8 372.5 L791.3 373.0 L791.9 373.4 L792.5 373.7 L793.1 374.0 L793.6 374.5 L794.3 374.6 L794.9 374.9 L795.5 375.2 L796.2 375.2 L797.1 374.9 L797.6 375.4 L798.1 376.0 L798.8 376.2 L799.6 375.6 L800.3 374.9 L801.0 374.2 L801.5 375.3 L802.2 375.8 L802.8 376.8 L803.5 376.6 L804.2 376.7 L804.8 376.6 L805.5 376.7 L806.2 376.3 L806.8 376.2 L807.5 376.0 L808.2 375.9 L808.6 375.1 L809.0 374.3 L809.8 374.5 L810.6 374.8 L811.3 374.7 L811.9 374.3 L812.5 374.0 L813.2 373.8 L813.8 373.5 L814.2 372.9 L814.3 371.9 L814.3 370.9 L814.9 370.7 L815.9 370.8 L816.9 370.8 L817.4 370.4 L817.8 369.8 L818.1 369.1 L818.7 368.7 L819.0 368.1 L819.3 367.5 L819.7 367.0 L819.6 366.1 L819.5 365.3 L820.2 364.9 L821.0 364.6 L821.2 363.9 L821.3 363.2 L821.5 362.6 L821.8 361.9 L821.8 361.2 L822.0 360.6 L821.6 359.8 L821.7 359.2 L822.0 358.5 L822.2 357.9 L821.8 357.2 L820.9 356.6 L820.0 356.0 L820.9 355.3 L821.4 354.6 L821.9 353.8 L822.0 353.1 L821.8 352.5 L821.5 351.8 L821.2 351.2 L821.3 350.5 L821.0 349.8 L820.5 349.3 L820.3 348.7 L820.0 348.0 L819.5 347.6 L818.9 347.2 L818.1 346.9 L817.7 346.4 L817.8 345.5 L817.7 344.7 L817.4 344.0 L817.0 343.5 L816.0 343.5 L814.9 343.7 L814.7 343.0 L814.8 341.8 L814.3 341.3 L813.6 341.2 L813.2 340.5 L812.5 340.3 L811.9 340.1 L811.4 339.6 L810.8 339.3 L809.7 340.0 L809.0 340.3 L808.6 339.5 L808.1 338.6 L807.5 338.2 L806.9 338.0 L806.2 337.9 L805.5 337.7 L804.8 337.8 L804.1 338.0 L803.4 338.7 L802.8 339.0 Z" fill="#d4fbfc" fill-opacity="0.9" fill-rule="evenodd"/><circle cx="903.3000000000001" cy="357.2" r="21.0" stroke="#d4fbfc" stroke-opacity="0.95" stroke-width="2.9" stroke-dasharray="0.01 3.76" stroke-linecap="round"/><circle cx="903.3000000000001" cy="357.2" r="21.0" stroke="#d4fbfc" stroke-opacity="0.8" stroke-width="0.9"/><path d="M1204.8 332.2 L1205.6 333.5 L1206.3 335.2 L1207.1 335.5 L1207.8 335.9 L1208.8 334.4 L1209.9 333.3 L1210.4 334.8 L1210.8 336.3 L1211.5 336.4 L1212.2 337.0 L1212.9 337.2 L1213.7 337.3 L1214.3 337.8 L1214.9 338.1 L1215.6 338.6 L1216.2 339.0 L1217.0 339.0 L1218.6 338.2 L1220.2 337.4 L1220.1 339.0 L1219.6 340.8 L1219.8 341.7 L1220.5 342.1 L1222.1 341.6 L1223.6 341.4 L1222.7 343.2 L1222.3 344.5 L1222.8 345.1 L1223.2 345.7 L1223.5 346.4 L1224.1 347.0 L1225.1 347.3 L1227.3 347.2 L1227.1 348.2 L1225.3 349.7 L1225.3 350.5 L1225.8 351.2 L1225.8 352.0 L1226.1 352.7 L1226.2 353.4 L1226.2 354.2 L1227.0 354.9 L1228.1 355.6 L1229.5 356.3 L1228.4 357.2 L1227.1 358.0 L1226.6 358.7 L1226.3 359.5 L1226.2 360.2 L1227.7 361.2 L1229.6 362.5 L1228.7 363.2 L1226.7 363.5 L1225.6 363.9 L1225.3 364.7 L1225.0 365.4 L1224.6 366.0 L1224.3 366.7 L1224.1 367.4 L1223.7 368.1 L1223.2 368.7 L1222.7 369.3 L1222.3 369.9 L1221.9 370.6 L1222.9 372.4 L1223.8 374.3 L1221.6 373.4 L1220.4 373.3 L1220.6 374.7 L1220.4 375.8 L1219.1 375.5 L1217.7 374.9 L1217.0 375.3 L1216.3 375.5 L1215.6 375.8 L1215.0 376.3 L1214.3 376.6 L1213.7 377.1 L1212.9 377.4 L1212.2 377.6 L1211.7 378.5 L1211.3 379.7 L1210.3 379.3 L1209.3 378.5 L1208.6 378.5 L1207.8 378.6 L1207.1 378.7 L1206.4 379.9 L1205.6 381.4 L1204.8 381.0 L1204.0 379.6 L1203.3 378.8 L1202.5 378.8 L1201.8 378.8 L1201.0 378.6 L1200.2 378.7 L1199.3 379.1 L1198.4 379.6 L1197.6 379.2 L1197.2 378.2 L1196.7 377.2 L1196.0 377.1 L1195.3 376.6 L1194.7 376.3 L1194.0 375.9 L1193.2 375.7 L1192.8 375.0 L1192.1 374.7 L1191.3 374.4 L1189.6 375.3 L1188.1 375.8 L1188.7 373.8 L1189.1 372.4 L1188.7 371.7 L1188.1 371.2 L1187.8 370.5 L1186.3 370.6 L1184.1 371.2 L1184.8 369.7 L1186.1 368.0 L1185.7 367.4 L1185.2 366.8 L1184.4 366.3 L1183.2 365.9 L1181.6 365.6 L1182.0 364.6 L1183.1 363.4 L1183.7 362.5 L1183.5 361.7 L1183.3 361.0 L1181.6 360.5 L1179.5 359.9 L1180.8 358.9 L1182.5 358.0 L1183.2 357.2 L1183.1 356.4 L1183.2 355.7 L1183.3 354.9 L1183.5 354.2 L1183.5 353.5 L1182.5 352.5 L1181.4 351.4 L1182.2 350.7 L1183.5 350.3 L1184.5 349.8 L1184.6 349.0 L1185.0 348.4 L1185.4 347.7 L1185.3 346.8 L1184.0 345.2 L1184.3 344.4 L1186.3 344.7 L1187.2 344.4 L1187.6 343.8 L1188.2 343.2 L1188.6 342.6 L1189.2 342.2 L1189.0 340.8 L1188.8 339.4 L1189.8 339.4 L1191.3 339.9 L1192.1 339.7 L1192.7 339.3 L1193.3 338.7 L1194.0 338.5 L1194.7 338.2 L1195.0 337.0 L1194.9 334.9 L1196.0 335.3 L1197.4 336.7 L1198.1 336.5 L1198.8 336.2 L1199.5 336.1 L1200.3 336.0 L1201.0 335.8 L1201.8 335.8 L1202.5 335.8 L1203.2 334.6 L1204.0 333.1 Z M1204.2 339.3 L1203.5 338.5 L1202.8 337.9 L1202.1 338.0 L1201.5 338.2 L1200.8 338.2 L1200.2 338.6 L1199.5 338.7 L1198.9 338.9 L1198.2 339.0 L1198.0 340.4 L1197.7 341.2 L1196.5 340.3 L1195.7 340.0 L1195.1 340.4 L1194.6 340.9 L1194.0 341.1 L1193.4 341.5 L1193.0 342.1 L1193.2 343.4 L1193.1 344.2 L1192.0 343.9 L1190.9 343.8 L1190.5 344.3 L1190.0 344.8 L1189.7 345.4 L1189.2 345.9 L1189.2 346.7 L1190.2 348.1 L1189.8 348.5 L1188.1 348.3 L1187.4 348.7 L1187.2 349.4 L1187.0 350.0 L1186.6 350.6 L1187.0 351.4 L1187.8 352.3 L1188.1 353.0 L1186.8 353.4 L1185.7 353.8 L1185.5 354.5 L1185.5 355.2 L1185.5 355.8 L1185.5 356.5 L1185.4 357.2 L1186.0 357.9 L1187.3 358.4 L1188.4 358.9 L1187.0 359.7 L1185.9 360.5 L1186.0 361.2 L1186.1 361.9 L1186.9 362.3 L1188.1 362.6 L1188.8 363.0 L1188.0 364.0 L1187.6 364.9 L1187.5 365.6 L1187.7 366.3 L1188.0 366.9 L1189.5 366.8 L1190.5 366.8 L1189.8 368.1 L1189.5 369.2 L1190.0 369.6 L1190.4 370.1 L1191.0 370.5 L1192.0 370.4 L1193.4 369.9 L1193.2 371.0 L1193.0 372.3 L1193.4 372.9 L1193.9 373.4 L1194.6 373.5 L1195.1 374.0 L1195.7 374.3 L1196.3 374.6 L1197.0 374.8 L1197.5 375.2 L1198.4 374.8 L1199.3 374.2 L1199.9 374.2 L1200.3 375.1 L1200.8 375.8 L1201.5 376.2 L1202.1 376.2 L1202.8 376.4 L1203.4 376.5 L1204.1 376.0 L1204.8 375.0 L1205.4 374.6 L1206.1 375.7 L1206.8 376.5 L1207.5 376.4 L1208.2 376.3 L1208.8 376.0 L1209.2 374.9 L1209.7 374.3 L1210.6 374.9 L1211.4 375.3 L1212.0 375.1 L1212.6 374.7 L1213.3 374.6 L1213.9 374.3 L1214.5 374.1 L1215.1 373.6 L1215.5 373.1 L1216.1 372.7 L1216.1 371.7 L1216.2 370.8 L1217.0 370.7 L1217.9 370.7 L1217.8 369.8 L1217.1 368.3 L1218.5 368.7 L1220.0 369.0 L1220.5 368.6 L1220.9 368.0 L1221.2 367.4 L1221.4 366.8 L1221.7 366.2 L1222.1 365.7 L1222.5 365.1 L1222.6 364.4 L1222.8 363.8 L1223.0 363.1 L1222.8 362.4 L1222.0 361.5 L1221.7 360.8 L1223.0 360.4 L1224.0 359.9 L1224.0 359.2 L1223.9 358.5 L1223.9 357.9 L1223.1 357.2 L1222.6 356.6 L1223.2 355.9 L1223.8 355.2 L1224.0 354.5 L1223.8 353.9 L1223.6 353.2 L1223.5 352.5 L1223.2 351.9 L1223.3 351.2 L1222.8 350.6 L1220.9 350.7 L1220.2 350.4 L1221.5 349.1 L1221.7 348.2 L1221.6 347.5 L1221.2 347.0 L1220.8 346.4 L1220.4 345.8 L1219.3 345.9 L1217.5 346.5 L1218.0 345.3 L1218.6 343.8 L1218.3 343.3 L1217.5 343.1 L1216.1 343.8 L1214.9 344.2 L1215.2 342.8 L1215.5 341.3 L1215.1 340.7 L1214.5 340.3 L1213.9 340.1 L1213.3 339.8 L1212.6 339.6 L1212.1 339.2 L1211.5 338.9 L1210.7 339.0 L1210.1 338.7 L1209.2 339.6 L1208.3 340.7 L1207.9 339.5 L1207.5 337.9 L1206.8 338.1 L1206.1 338.1 L1205.4 339.1 L1204.8 339.8 Z" fill="#d4fbfc" fill-opacity="0.9" fill-rule="evenodd"/><path d="M1405.8 333.2 L1406.6 334.2 L1407.4 334.1 L1408.3 333.6 L1409.4 331.9 L1410.0 333.4 L1410.6 334.6 L1411.3 335.0 L1412.1 335.1 L1412.9 335.4 L1413.6 335.7 L1414.4 336.0 L1415.4 335.7 L1416.7 334.8 L1417.3 335.5 L1417.6 336.8 L1419.1 336.0 L1420.4 335.5 L1420.2 337.4 L1419.8 339.2 L1421.1 338.9 L1423.0 338.1 L1422.5 339.9 L1422.3 341.2 L1422.8 341.9 L1423.3 342.5 L1423.9 343.1 L1424.3 343.8 L1425.0 344.3 L1425.2 345.1 L1426.3 345.3 L1428.4 345.2 L1430.1 345.3 L1428.7 347.0 L1427.0 348.6 L1427.3 349.4 L1427.6 350.1 L1427.9 350.9 L1430.6 351.0 L1431.9 351.6 L1429.0 353.1 L1430.8 353.7 L1432.6 354.4 L1430.7 355.5 L1428.7 356.4 L1428.9 357.2 L1429.7 358.0 L1431.6 359.0 L1430.2 359.8 L1428.5 360.4 L1428.6 361.2 L1428.2 362.0 L1428.1 362.8 L1427.8 363.5 L1428.3 364.5 L1430.0 366.0 L1431.0 367.4 L1429.0 367.5 L1426.9 367.5 L1426.6 368.2 L1428.6 370.4 L1427.4 370.7 L1424.8 370.0 L1424.4 370.7 L1423.9 371.4 L1424.7 373.0 L1424.6 374.1 L1422.5 373.3 L1421.7 373.6 L1421.7 374.8 L1422.3 376.9 L1421.6 377.4 L1419.8 376.4 L1418.7 376.4 L1417.9 376.6 L1418.1 378.5 L1418.0 380.1 L1416.1 378.4 L1415.2 378.3 L1414.4 378.4 L1413.7 378.9 L1413.1 379.7 L1413.0 382.2 L1411.7 380.9 L1410.6 379.6 L1409.8 379.9 L1409.0 380.1 L1408.2 380.1 L1407.4 380.0 L1406.6 380.3 L1405.8 380.0 L1405.0 380.6 L1404.0 382.4 L1403.1 382.9 L1402.4 381.6 L1401.7 380.4 L1401.0 379.7 L1400.3 379.3 L1399.5 379.1 L1398.7 379.0 L1398.0 378.7 L1397.1 378.6 L1395.9 379.4 L1394.6 380.1 L1394.5 378.4 L1394.3 377.1 L1393.5 376.8 L1392.9 376.3 L1392.3 375.8 L1391.3 375.7 L1388.8 377.5 L1388.7 376.2 L1389.4 374.2 L1386.8 375.5 L1387.2 373.9 L1388.2 372.0 L1387.8 371.3 L1387.2 370.7 L1386.9 370.0 L1386.2 369.4 L1383.8 369.9 L1382.8 369.4 L1384.7 367.5 L1384.9 366.5 L1384.4 365.9 L1383.8 365.2 L1381.3 365.2 L1381.0 364.3 L1383.2 362.8 L1383.2 362.0 L1382.2 361.4 L1380.1 360.8 L1381.7 359.7 L1383.0 358.8 L1382.7 358.0 L1381.5 357.2 L1380.5 356.3 L1382.9 355.6 L1383.1 354.8 L1383.0 354.0 L1383.0 353.2 L1383.4 352.4 L1383.5 351.6 L1383.6 350.8 L1381.4 349.3 L1382.4 348.7 L1384.7 348.7 L1384.8 347.9 L1384.6 346.9 L1383.5 345.3 L1385.4 345.4 L1386.4 345.1 L1386.7 344.3 L1385.9 342.7 L1385.6 341.4 L1387.7 342.0 L1388.8 341.9 L1389.2 341.1 L1389.4 340.2 L1388.6 338.1 L1389.4 337.7 L1391.4 338.8 L1392.3 338.6 L1392.9 338.1 L1392.9 336.5 L1392.8 334.7 L1394.4 335.7 L1395.7 336.5 L1396.4 336.2 L1397.3 336.0 L1397.9 335.6 L1398.7 335.3 L1399.5 335.1 L1399.8 333.3 L1400.3 331.3 L1401.5 332.7 L1402.6 334.2 L1403.3 333.4 L1404.0 331.3 L1404.9 331.1 Z M1405.2 340.1 L1404.6 340.0 L1403.8 338.2 L1403.0 337.6 L1402.5 338.7 L1402.1 339.9 L1401.2 338.9 L1400.3 338.0 L1399.6 338.2 L1399.0 338.4 L1398.2 338.5 L1397.7 338.9 L1397.1 339.3 L1397.0 340.7 L1397.3 342.4 L1395.9 341.4 L1394.6 340.6 L1394.1 341.1 L1393.7 341.7 L1394.4 343.6 L1394.1 344.2 L1392.3 343.2 L1391.5 343.4 L1390.8 343.7 L1390.9 344.7 L1391.7 346.2 L1390.7 346.2 L1389.3 346.0 L1388.7 346.5 L1389.0 347.5 L1390.2 348.9 L1388.3 348.7 L1387.5 349.0 L1387.1 349.6 L1388.3 350.8 L1388.6 351.6 L1386.6 351.7 L1386.4 352.4 L1386.1 353.0 L1386.2 353.7 L1386.0 354.4 L1385.7 355.1 L1385.8 355.8 L1387.7 356.6 L1386.9 357.2 L1385.9 357.9 L1385.7 358.6 L1387.0 359.2 L1388.4 359.6 L1386.9 360.5 L1386.3 361.3 L1386.6 362.0 L1388.9 362.0 L1389.0 362.6 L1387.4 363.9 L1387.4 364.7 L1387.4 365.4 L1388.1 365.8 L1390.3 365.5 L1390.1 366.3 L1388.9 367.8 L1389.1 368.5 L1389.6 369.0 L1389.9 369.6 L1390.5 370.1 L1392.4 369.3 L1393.8 368.8 L1392.3 371.2 L1394.0 370.3 L1395.0 370.0 L1393.8 372.6 L1394.0 373.4 L1394.7 373.7 L1395.3 374.0 L1395.8 374.6 L1396.8 374.0 L1398.1 373.0 L1398.2 374.4 L1398.4 375.6 L1398.9 376.1 L1399.6 376.3 L1400.2 376.6 L1400.9 376.8 L1401.6 376.8 L1402.4 376.4 L1403.2 375.5 L1404.0 374.4 L1404.6 374.9 L1405.1 376.8 L1405.8 377.4 L1406.5 377.1 L1407.2 377.2 L1407.9 377.0 L1408.6 376.9 L1409.3 376.9 L1410.0 376.8 L1410.4 375.5 L1410.6 374.0 L1411.8 375.7 L1412.6 375.9 L1413.4 375.9 L1413.9 375.4 L1414.4 374.9 L1414.4 373.3 L1415.3 373.7 L1416.4 374.2 L1416.9 373.7 L1417.3 373.0 L1417.0 371.5 L1417.4 371.1 L1418.8 371.7 L1419.8 371.7 L1420.1 371.0 L1419.4 369.4 L1420.1 369.2 L1421.5 369.5 L1422.0 369.0 L1422.4 368.4 L1421.0 366.7 L1420.7 365.8 L1423.1 366.4 L1423.4 365.8 L1422.2 364.5 L1421.1 363.4 L1422.4 363.2 L1424.3 363.2 L1425.1 362.7 L1425.2 362.0 L1425.5 361.4 L1425.4 360.7 L1425.7 360.0 L1424.9 359.2 L1424.2 358.5 L1425.3 357.9 L1425.7 357.2 L1425.9 356.5 L1424.3 355.9 L1422.9 355.4 L1424.0 354.6 L1425.0 353.8 L1422.0 353.8 L1422.9 352.9 L1425.1 351.7 L1424.9 351.0 L1424.7 350.3 L1424.5 349.7 L1422.4 349.8 L1420.6 350.0 L1421.5 348.9 L1422.6 347.5 L1422.9 346.5 L1422.3 346.1 L1422.1 345.4 L1421.6 344.9 L1421.2 344.3 L1420.7 343.8 L1420.2 343.3 L1419.0 343.6 L1417.5 344.2 L1418.1 342.5 L1418.2 341.3 L1416.8 342.0 L1415.6 342.7 L1415.5 341.6 L1415.6 340.3 L1414.8 340.3 L1414.1 340.3 L1413.8 339.2 L1413.3 338.6 L1412.7 338.3 L1412.0 338.1 L1411.3 338.0 L1410.7 337.7 L1409.9 337.7 L1409.1 338.2 L1408.4 338.9 L1407.8 337.8 L1407.2 337.4 L1406.5 337.2 L1405.8 338.1 Z" fill="#d4fbfc" fill-opacity="0.9" fill-rule="evenodd"/><g stroke="#c4e6f0" stroke-width="1.1" stroke-opacity="0.95" stroke-linecap="round"><path d="M904.3 428.7 A29 29 0 1 1 902.3 428.7"/><path d="M904.1 435.9 A21.8 21.8 0 1 1 902.5 435.9"/><path d="M903.3 445.9 A11.8 11.8 0 0 1 914.9 455.6"/><path d="M915.1 458.7 A11.8 11.8 0 0 1 904.3 469.4"/><path d="M902.9 469.4 A11.8 11.8 0 0 1 901.3 446.0"/></g><g stroke="#c4e6f0" stroke-width="1.1" stroke-opacity="0.95" stroke-linecap="round"><path d="M1005.8 428.7 A29 29 0 0 1 1026.0 476.3"/><path d="M1003.8 486.7 A29 29 0 0 1 1002.8 428.7"/><path d="M1004.6 435.9 A21.8 21.8 0 1 1 1003.0 435.9"/><path d="M1007.8 446.6 A11.8 11.8 0 0 1 1012.8 450.1"/><path d="M1014.0 451.8 A11.8 11.8 0 0 1 1005.8 469.3"/><path d="M1001.8 469.3 A11.8 11.8 0 0 1 994.8 465.2"/><path d="M993.6 463.6 A11.8 11.8 0 0 1 999.8 446.6"/><path d="M1012.8 473.2 A18 18 0 0 1 1000.7 475.4"/></g><g stroke="#c4e6f0" stroke-width="1.1" stroke-opacity="0.95" stroke-linecap="round"><path d="M1105.3 428.7 A29 29 0 0 1 1105.3 486.6"/><path d="M1103.3 486.6 A29 29 0 0 1 1103.3 428.7"/><path d="M1105.1 435.9 A21.8 21.8 0 1 1 1103.5 435.9"/><path d="M1106.3 446.0 A11.8 11.8 0 0 1 1111.9 448.6"/><path d="M1114.5 451.8 A11.8 11.8 0 0 1 1115.9 459.7"/><path d="M1114.5 463.6 A11.8 11.8 0 0 1 1106.3 469.3"/><path d="M1100.3 468.7 A11.8 11.8 0 0 1 1093.2 461.7"/><path d="M1092.5 457.7 A11.8 11.8 0 0 1 1102.3 446.0"/><path d="M1105.8 440.7 A17 17 0 0 1 1116.3 445.6"/><path d="M1101.3 474.4 A17 17 0 0 1 1089.6 466.2"/></g><g stroke="#cfe2f8" stroke-linecap="round"><circle cx="702.3000000000001" cy="558.1" r="5.2" stroke-opacity="0.45" stroke-width="1"/><circle cx="702.3000000000001" cy="558.1" r="8" stroke-opacity="0.72" stroke-width="0.95" stroke-dasharray="0.4 1.3"/><circle cx="702.3000000000001" cy="558.1" r="10.8" stroke-opacity="0.72" stroke-width="0.95" stroke-dasharray="0.4 1.3"/><circle cx="702.3000000000001" cy="558.1" r="13.6" stroke-opacity="0.72" stroke-width="0.95" stroke-dasharray="0.4 1.3"/><circle cx="702.3000000000001" cy="558.1" r="16.4" stroke-opacity="0.72" stroke-width="0.95" stroke-dasharray="0.4 1.3"/><circle cx="702.3000000000001" cy="558.1" r="19.2" stroke-opacity="0.72" stroke-width="0.95" stroke-dasharray="0.4 1.3"/><circle cx="702.3000000000001" cy="558.1" r="22" stroke-opacity="0.72" stroke-width="0.95" stroke-dasharray="0.4 1.3"/><circle cx="702.3000000000001" cy="558.1" r="24.8" stroke-opacity="0.72" stroke-width="0.95" stroke-dasharray="0.4 1.3"/><circle cx="702.3000000000001" cy="558.1" r="27.4" stroke-opacity="0.72" stroke-width="0.95" stroke-dasharray="0.4 1.3"/><circle cx="702.3000000000001" cy="558.1" r="30" stroke-opacity="0.72" stroke-width="0.95" stroke-dasharray="0.4 1.3"/></g><g fill="#e4f0ff" fill-opacity="0.92"><circle cx="701.9" cy="528.1" r="1.2" fill-opacity="0.8"/><circle cx="712.1" cy="529.7" r="1.0" fill-opacity="0.6"/><circle cx="720.7" cy="534.4" r="1.0" fill-opacity="0.95"/><circle cx="725.1" cy="538.6" r="1.2" fill-opacity="0.6"/><circle cx="730.9" cy="549.0" r="0.8" fill-opacity="0.8"/><circle cx="732.3" cy="558.9" r="1.0" fill-opacity="0.6"/><circle cx="731.5" cy="564.9" r="0.8" fill-opacity="0.6"/><circle cx="726.7" cy="575.5" r="1.0" fill-opacity="0.95"/><circle cx="719.9" cy="582.4" r="1.0" fill-opacity="0.95"/><circle cx="712.8" cy="586.2" r="1.0" fill-opacity="0.95"/><circle cx="703.4" cy="588.1" r="0.8" fill-opacity="0.95"/><circle cx="692.2" cy="586.4" r="1.0" fill-opacity="0.6"/><circle cx="686.7" cy="583.8" r="0.8" fill-opacity="0.6"/><circle cx="677.9" cy="575.5" r="0.8" fill-opacity="0.8"/><circle cx="674.6" cy="569.7" r="1.2" fill-opacity="0.8"/><circle cx="672.3" cy="559.6" r="0.8" fill-opacity="0.6"/><circle cx="673.7" cy="549.2" r="1.0" fill-opacity="0.6"/><circle cx="676.5" cy="542.8" r="0.8" fill-opacity="0.6"/><circle cx="684.4" cy="534.0" r="1.2" fill-opacity="0.95"/><circle cx="694.0" cy="529.3" r="0.8" fill-opacity="0.6"/><circle cx="726.3" cy="551.9" r="1.2" fill-opacity="0.8"/><circle cx="677.7" cy="561.3" r="0.8" fill-opacity="0.95"/><circle cx="698.7" cy="539.2" r="1.0" fill-opacity="0.8"/><circle cx="711.9" cy="541.5" r="1.0" fill-opacity="0.8"/><circle cx="721.5" cy="568.8" r="0.8" fill-opacity="0.6"/><circle cx="697.4" cy="573.8" r="1.2" fill-opacity="0.8"/></g><g stroke="#cfe2f8" stroke-linecap="round"><circle cx="802.8000000000001" cy="558.1" r="5.2" stroke-opacity="0.45" stroke-width="1"/><circle cx="802.8000000000001" cy="558.1" r="8" stroke-opacity="0.72" stroke-width="0.95" stroke-dasharray="0.4 1.3"/><circle cx="802.8000000000001" cy="558.1" r="10.8" stroke-opacity="0.72" stroke-width="0.95" stroke-dasharray="0.4 1.3"/><circle cx="802.8000000000001" cy="558.1" r="13.6" stroke-opacity="0.72" stroke-width="0.95" stroke-dasharray="0.4 1.3"/><circle cx="802.8000000000001" cy="558.1" r="16.4" stroke-opacity="0.72" stroke-width="0.95" stroke-dasharray="0.4 1.3"/><circle cx="802.8000000000001" cy="558.1" r="19.2" stroke-opacity="0.72" stroke-width="0.95" stroke-dasharray="0.4 1.3"/><circle cx="802.8000000000001" cy="558.1" r="22" stroke-opacity="0.72" stroke-width="0.95" stroke-dasharray="0.4 1.3"/><circle cx="802.8000000000001" cy="558.1" r="24.8" stroke-opacity="0.72" stroke-width="0.95" stroke-dasharray="0.4 1.3"/><circle cx="802.8000000000001" cy="558.1" r="27.4" stroke-opacity="0.72" stroke-width="0.95" stroke-dasharray="0.4 1.3"/><circle cx="802.8000000000001" cy="558.1" r="30" stroke-opacity="0.72" stroke-width="0.95" stroke-dasharray="0.4 1.3"/></g><g fill="#e4f0ff" fill-opacity="0.92"><circle cx="805.8" cy="528.2" r="0.8" fill-opacity="0.6"/><circle cx="810.2" cy="529.0" r="1.0" fill-opacity="0.6"/><circle cx="820.3" cy="533.7" r="1.2" fill-opacity="0.95"/><circle cx="827.4" cy="540.9" r="0.8" fill-opacity="0.6"/><circle cx="830.6" cy="546.9" r="0.8" fill-opacity="0.8"/><circle cx="832.8" cy="559.0" r="0.8" fill-opacity="0.95"/><circle cx="831.4" cy="567.1" r="1.0" fill-opacity="0.95"/><circle cx="826.7" cy="576.2" r="1.2" fill-opacity="0.6"/><circle cx="821.0" cy="582.0" r="1.0" fill-opacity="0.8"/><circle cx="814.3" cy="585.8" r="0.8" fill-opacity="0.95"/><circle cx="803.7" cy="588.1" r="1.2" fill-opacity="0.95"/><circle cx="796.3" cy="587.4" r="1.0" fill-opacity="0.95"/><circle cx="786.6" cy="583.4" r="0.8" fill-opacity="0.8"/><circle cx="779.7" cy="577.2" r="1.2" fill-opacity="0.95"/><circle cx="775.2" cy="569.8" r="1.0" fill-opacity="0.95"/><circle cx="772.8" cy="558.3" r="1.0" fill-opacity="0.6"/><circle cx="773.8" cy="550.5" r="0.8" fill-opacity="0.8"/><circle cx="779.0" cy="539.9" r="1.2" fill-opacity="0.8"/><circle cx="784.4" cy="534.4" r="1.0" fill-opacity="0.8"/><circle cx="793.2" cy="529.7" r="0.8" fill-opacity="0.8"/><circle cx="826.8" cy="551.9" r="1.0" fill-opacity="0.95"/><circle cx="778.3" cy="561.9" r="1.2" fill-opacity="0.95"/><circle cx="799.6" cy="539.2" r="1.2" fill-opacity="0.8"/><circle cx="813.0" cy="541.8" r="1.2" fill-opacity="0.8"/><circle cx="822.5" cy="568.0" r="1.0" fill-opacity="0.8"/><circle cx="798.1" cy="573.8" r="1.0" fill-opacity="0.6"/></g><g stroke="#cfe2f8" stroke-linecap="round"><circle cx="903.3000000000001" cy="558.1" r="5.2" stroke-opacity="0.45" stroke-width="1"/><circle cx="903.3000000000001" cy="558.1" r="8" stroke-opacity="0.72" stroke-width="0.95" stroke-dasharray="0.4 1.3"/><circle cx="903.3000000000001" cy="558.1" r="10.8" stroke-opacity="0.72" stroke-width="0.95" stroke-dasharray="0.4 1.3"/><circle cx="903.3000000000001" cy="558.1" r="13.6" stroke-opacity="0.72" stroke-width="0.95" stroke-dasharray="0.4 1.3"/><circle cx="903.3000000000001" cy="558.1" r="16.4" stroke-opacity="0.72" stroke-width="0.95" stroke-dasharray="0.4 1.3"/><circle cx="903.3000000000001" cy="558.1" r="19.2" stroke-opacity="0.72" stroke-width="0.95" stroke-dasharray="0.4 1.3"/><circle cx="903.3000000000001" cy="558.1" r="22" stroke-opacity="0.72" stroke-width="0.95" stroke-dasharray="0.4 1.3"/><circle cx="903.3000000000001" cy="558.1" r="24.8" stroke-opacity="0.72" stroke-width="0.95" stroke-dasharray="0.4 1.3"/><circle cx="903.3000000000001" cy="558.1" r="27.4" stroke-opacity="0.72" stroke-width="0.95" stroke-dasharray="0.4 1.3"/><circle cx="903.3000000000001" cy="558.1" r="30" stroke-opacity="0.72" stroke-width="0.95" stroke-dasharray="0.4 1.3"/></g><g fill="#e4f0ff" fill-opacity="0.92"><circle cx="906.1" cy="528.2" r="1.0" fill-opacity="0.6"/><circle cx="910.6" cy="529.0" r="1.0" fill-opacity="0.8"/><circle cx="919.7" cy="532.9" r="1.0" fill-opacity="0.6"/><circle cx="927.5" cy="540.4" r="1.0" fill-opacity="0.8"/><circle cx="930.7" cy="546.0" r="1.2" fill-opacity="0.8"/><circle cx="933.3" cy="558.7" r="0.8" fill-opacity="0.6"/><circle cx="931.5" cy="568.3" r="1.0" fill-opacity="0.8"/><circle cx="929.2" cy="573.2" r="1.2" fill-opacity="0.95"/><circle cx="922.0" cy="581.6" r="0.8" fill-opacity="0.6"/><circle cx="912.4" cy="586.7" r="1.2" fill-opacity="0.8"/><circle cx="903.7" cy="588.1" r="1.2" fill-opacity="0.6"/><circle cx="893.2" cy="586.3" r="1.0" fill-opacity="0.95"/><circle cx="885.6" cy="582.3" r="1.0" fill-opacity="0.95"/><circle cx="880.2" cy="577.3" r="1.0" fill-opacity="0.95"/><circle cx="875.7" cy="570.0" r="1.0" fill-opacity="0.6"/><circle cx="873.3" cy="558.2" r="1.2" fill-opacity="0.8"/><circle cx="874.7" cy="549.1" r="0.8" fill-opacity="0.6"/><circle cx="879.2" cy="540.3" r="1.2" fill-opacity="0.8"/><circle cx="885.4" cy="534.0" r="1.2" fill-opacity="0.6"/><circle cx="893.4" cy="529.8" r="0.8" fill-opacity="0.6"/><circle cx="927.2" cy="551.4" r="1.2" fill-opacity="0.8"/><circle cx="878.5" cy="558.7" r="1.0" fill-opacity="0.95"/><circle cx="899.5" cy="539.3" r="1.0" fill-opacity="0.8"/><circle cx="913.0" cy="541.5" r="1.0" fill-opacity="0.95"/><circle cx="922.8" cy="568.3" r="0.8" fill-opacity="0.6"/><circle cx="897.4" cy="573.4" r="0.8" fill-opacity="0.95"/><circle cx="903.7" cy="547.3" r="0.95" fill-opacity="0.8"/><circle cx="908.4" cy="548.6" r="0.95" fill-opacity="0.95"/><circle cx="912.4" cy="552.2" r="0.95" fill-opacity="0.95"/><circle cx="914.1" cy="558.2" r="0.95" fill-opacity="0.8"/><circle cx="912.9" cy="563.1" r="0.95" fill-opacity="0.6"/><circle cx="909.3" cy="567.1" r="0.95" fill-opacity="0.8"/><circle cx="903.5" cy="568.9" r="0.95" fill-opacity="0.6"/><circle cx="897.5" cy="567.2" r="0.95" fill-opacity="0.95"/><circle cx="894.3" cy="564.1" r="0.95" fill-opacity="0.6"/><circle cx="892.5" cy="557.6" r="0.95" fill-opacity="0.6"/><circle cx="894.0" cy="552.6" r="0.95" fill-opacity="0.8"/><circle cx="898.2" cy="548.6" r="0.95" fill-opacity="0.8"/></g><g fill="#cfe2f8"><circle cx="1315.2" cy="558.9" r="0.4" fill-opacity="0.35"/><circle cx="1313.3" cy="555.5" r="1.0" fill-opacity="0.35"/><circle cx="1299.7" cy="535.3" r="0.4" fill-opacity="0.25"/><circle cx="1323.8" cy="579.5" r="1.0" fill-opacity="0.7"/><circle cx="1300.5" cy="557.3" r="0.4" fill-opacity="0.25"/><circle cx="1307.4" cy="541.5" r="0.8" fill-opacity="0.5"/><circle cx="1307.2" cy="563.8" r="0.5" fill-opacity="0.35"/><circle cx="1303.5" cy="547.4" r="0.8" fill-opacity="0.25"/><circle cx="1311.5" cy="556.3" r="0.5" fill-opacity="0.35"/><circle cx="1310.6" cy="549.2" r="0.8" fill-opacity="0.25"/><circle cx="1317.0" cy="565.2" r="0.5" fill-opacity="0.35"/><circle cx="1306.1" cy="555.5" r="0.6" fill-opacity="0.35"/><circle cx="1302.3" cy="563.6" r="0.6" fill-opacity="0.5"/><circle cx="1301.7" cy="571.1" r="1.0" fill-opacity="0.7"/><circle cx="1298.7" cy="558.9" r="0.5" fill-opacity="0.25"/><circle cx="1307.6" cy="549.2" r="0.6" fill-opacity="0.35"/><circle cx="1284.1" cy="549.7" r="0.6" fill-opacity="0.25"/><circle cx="1309.8" cy="566.7" r="0.4" fill-opacity="0.5"/><circle cx="1301.7" cy="547.9" r="0.6" fill-opacity="0.35"/><circle cx="1310.9" cy="563.0" r="0.5" fill-opacity="0.5"/><circle cx="1301.5" cy="559.5" r="0.4" fill-opacity="0.5"/><circle cx="1318.5" cy="567.5" r="0.4" fill-opacity="0.35"/><circle cx="1311.6" cy="577.8" r="0.5" fill-opacity="0.7"/><circle cx="1285.6" cy="541.5" r="1.0" fill-opacity="0.7"/><circle cx="1304.0" cy="556.6" r="0.4" fill-opacity="0.25"/><circle cx="1300.1" cy="558.6" r="0.8" fill-opacity="0.25"/><circle cx="1304.8" cy="575.1" r="0.8" fill-opacity="0.5"/><circle cx="1306.4" cy="572.2" r="0.8" fill-opacity="0.35"/><circle cx="1315.1" cy="557.7" r="0.5" fill-opacity="0.25"/><circle cx="1285.0" cy="549.0" r="0.5" fill-opacity="0.35"/><circle cx="1323.6" cy="551.7" r="0.6" fill-opacity="0.35"/><circle cx="1291.6" cy="553.2" r="1.0" fill-opacity="0.7"/><circle cx="1306.1" cy="563.7" r="0.5" fill-opacity="0.7"/><circle cx="1303.6" cy="562.6" r="0.6" fill-opacity="0.25"/><circle cx="1294.9" cy="556.6" r="0.6" fill-opacity="0.35"/><circle cx="1311.2" cy="555.9" r="0.5" fill-opacity="0.25"/><circle cx="1314.9" cy="545.4" r="0.4" fill-opacity="0.7"/><circle cx="1305.5" cy="558.8" r="0.5" fill-opacity="0.7"/><circle cx="1326.1" cy="541.0" r="0.6" fill-opacity="0.35"/><circle cx="1308.6" cy="556.3" r="0.4" fill-opacity="0.25"/><circle cx="1306.4" cy="556.0" r="0.8" fill-opacity="0.5"/><circle cx="1309.2" cy="573.5" r="0.4" fill-opacity="0.7"/><circle cx="1303.2" cy="560.0" r="0.6" fill-opacity="0.5"/><circle cx="1302.5" cy="550.0" r="0.6" fill-opacity="0.25"/><circle cx="1306.5" cy="549.2" r="1.0" fill-opacity="0.7"/><circle cx="1308.3" cy="555.5" r="0.8" fill-opacity="0.5"/><circle cx="1303.0" cy="554.5" r="0.5" fill-opacity="0.5"/><circle cx="1306.2" cy="555.8" r="0.4" fill-opacity="0.25"/><circle cx="1305.0" cy="559.6" r="0.5" fill-opacity="0.5"/><circle cx="1296.7" cy="564.1" r="0.5" fill-opacity="0.35"/><circle cx="1298.0" cy="552.4" r="0.6" fill-opacity="0.25"/><circle cx="1298.9" cy="546.4" r="0.5" fill-opacity="0.25"/><circle cx="1284.4" cy="579.4" r="0.8" fill-opacity="0.5"/><circle cx="1302.4" cy="565.7" r="0.8" fill-opacity="0.7"/><circle cx="1301.5" cy="550.3" r="0.8" fill-opacity="0.25"/><circle cx="1306.7" cy="555.3" r="0.5" fill-opacity="0.35"/><circle cx="1323.4" cy="563.7" r="0.6" fill-opacity="0.5"/><circle cx="1310.8" cy="557.5" r="1.0" fill-opacity="0.25"/><circle cx="1304.0" cy="560.6" r="0.8" fill-opacity="0.35"/><circle cx="1307.5" cy="536.4" r="0.6" fill-opacity="0.5"/><circle cx="1307.9" cy="550.0" r="0.8" fill-opacity="0.35"/><circle cx="1308.6" cy="559.8" r="0.8" fill-opacity="0.7"/><circle cx="1291.6" cy="563.5" r="0.4" fill-opacity="0.5"/><circle cx="1305.5" cy="559.9" r="0.4" fill-opacity="0.7"/><circle cx="1315.3" cy="545.9" r="0.6" fill-opacity="0.7"/><circle cx="1307.0" cy="563.7" r="0.5" fill-opacity="0.25"/><circle cx="1304.5" cy="556.3" r="0.8" fill-opacity="0.7"/><circle cx="1305.3" cy="555.0" r="0.5" fill-opacity="0.5"/><circle cx="1286.1" cy="567.4" r="0.8" fill-opacity="0.25"/><circle cx="1310.4" cy="564.1" r="1.0" fill-opacity="0.5"/><circle cx="1308.5" cy="554.8" r="0.8" fill-opacity="0.7"/><circle cx="1306.0" cy="562.9" r="0.6" fill-opacity="0.5"/><circle cx="1314.9" cy="555.6" r="0.6" fill-opacity="0.7"/><circle cx="1307.6" cy="553.3" r="0.8" fill-opacity="0.5"/><circle cx="1319.9" cy="564.9" r="0.5" fill-opacity="0.25"/><circle cx="1305.9" cy="535.5" r="0.4" fill-opacity="0.5"/><circle cx="1305.0" cy="560.6" r="0.4" fill-opacity="0.25"/><circle cx="1298.5" cy="569.9" r="1.0" fill-opacity="0.7"/><circle cx="1296.7" cy="559.4" r="0.5" fill-opacity="0.25"/><circle cx="1304.9" cy="569.0" r="0.6" fill-opacity="0.5"/><circle cx="1306.3" cy="556.8" r="0.6" fill-opacity="0.25"/><circle cx="1303.7" cy="554.2" r="1.0" fill-opacity="0.35"/><circle cx="1287.7" cy="552.2" r="0.6" fill-opacity="0.35"/><circle cx="1293.6" cy="554.7" r="0.8" fill-opacity="0.7"/><circle cx="1284.3" cy="552.3" r="0.6" fill-opacity="0.25"/><circle cx="1288.4" cy="536.0" r="0.5" fill-opacity="0.35"/><circle cx="1297.5" cy="539.1" r="0.5" fill-opacity="0.7"/><circle cx="1280.6" cy="565.6" r="0.5" fill-opacity="0.35"/><circle cx="1288.0" cy="562.5" r="0.6" fill-opacity="0.7"/><circle cx="1285.6" cy="559.6" r="0.5" fill-opacity="0.7"/><circle cx="1295.4" cy="574.5" r="0.5" fill-opacity="0.35"/><circle cx="1305.3" cy="558.1" r="0.6" fill-opacity="0.35"/><circle cx="1308.5" cy="569.6" r="0.8" fill-opacity="0.5"/></g></g></svg>
<div class="a" style="left:552px;top:590px;width:894px;height:55px;background:#262a35;"></div>
<div class="a" style="left:552px;top:590px;width:101px;height:55px;background:linear-gradient(to right,#2f2f33,#353539 50%,#323236)"></div>
<div class="a" style="left:651.5px;top:590px;width:1px;height:55px;background:#363a45;"></div>
<div class="a" style="left:752.5px;top:590px;width:1px;height:55px;background:#363a45;"></div>
<div class="a" style="left:853.5px;top:590px;width:1px;height:55px;background:#363a45;"></div>
<div class="a" style="left:953.5px;top:590px;width:1px;height:55px;background:#363a45;"></div>
<div class="a" style="left:1053.5px;top:590px;width:1px;height:55px;background:#363a45;"></div>
<div class="a" style="left:1154.5px;top:590px;width:1px;height:55px;background:#363a45;"></div>
<div class="a" style="left:1255.5px;top:590px;width:1px;height:55px;background:#363a45;"></div>
<div class="a" style="left:1355.5px;top:590px;width:1px;height:55px;background:#363a45;"></div>
<div class="a" style="left:1446px;top:590px;width:54px;height:55px;background:#1b1b1e;"></div>
<div class="a t " style="left:452.20000000000005px;top:622.25px;font-size:14px;color:#f0f0f2;width:300px;text-align:center;line-height:17px;">1</div>
<div class="a t " style="left:552.7px;top:622.25px;font-size:14px;color:#f0f0f2;width:300px;text-align:center;line-height:17px;">2</div>
<div class="a t " style="left:653.2px;top:622.25px;font-size:14px;color:#f0f0f2;width:300px;text-align:center;line-height:17px;">3</div>
<div class="a t " style="left:753.7px;top:622.25px;font-size:14px;color:#f0f0f2;width:300px;text-align:center;line-height:17px;">4</div>
<div class="a t " style="left:854.2px;top:622.25px;font-size:14px;color:#f0f0f2;width:300px;text-align:center;line-height:17px;">5</div>
<div class="a t " style="left:954.7px;top:622.25px;font-size:14px;color:#f0f0f2;width:300px;text-align:center;line-height:17px;">6</div>
<div class="a t " style="left:1055.2px;top:622.25px;font-size:14px;color:#f0f0f2;width:300px;text-align:center;line-height:17px;">7</div>
<div class="a t " style="left:1155.7px;top:622.25px;font-size:14px;color:#f0f0f2;width:300px;text-align:center;line-height:17px;">8</div>
<div class="a t " style="left:1256.2px;top:622.25px;font-size:14px;color:#f0f0f2;width:300px;text-align:center;line-height:17px;">9</div>
<svg width="1500" height="1018" viewBox="0 0 1500 1018" aria-hidden="true"><path d="M593.7 606.8 L602.2 601.3 L610.7 606.8" fill="none" stroke="#fff" stroke-width="2.4" stroke-linecap="round" stroke-linejoin="round"/><path d="M694.2 606.8 L702.7 601.3 L711.2 606.8" fill="none" stroke="#fff" stroke-width="2.4" stroke-linecap="round" stroke-linejoin="round"/><path d="M794.7 606.8 L803.2 601.3 L811.7 606.8" fill="none" stroke="#fff" stroke-width="2.4" stroke-linecap="round" stroke-linejoin="round"/><path d="M895.2 606.8 L903.7 601.3 L912.2 606.8" fill="none" stroke="#fff" stroke-width="2.4" stroke-linecap="round" stroke-linejoin="round"/><path d="M995.7 606.8 L1004.2 601.3 L1012.7 606.8" fill="none" stroke="#fff" stroke-width="2.4" stroke-linecap="round" stroke-linejoin="round"/><path d="M1096.2 606.8 L1104.7 601.3 L1113.2 606.8" fill="none" stroke="#fff" stroke-width="2.4" stroke-linecap="round" stroke-linejoin="round"/><path d="M1196.7 606.8 L1205.2 601.3 L1213.7 606.8" fill="none" stroke="#fff" stroke-width="2.4" stroke-linecap="round" stroke-linejoin="round"/><path d="M1297.2 606.8 L1305.7 601.3 L1314.2 606.8" fill="none" stroke="#fff" stroke-width="2.4" stroke-linecap="round" stroke-linejoin="round"/><path d="M1397.7 606.8 L1406.2 601.3 L1414.7 606.8" fill="none" stroke="#fff" stroke-width="2.4" stroke-linecap="round" stroke-linejoin="round"/><rect x="1464.8" y="609.8" width="17" height="17" rx="2.2" fill="#f5f5f5"/></svg>
<div class="a" style="left:0px;top:645px;width:1500px;height:5px;background:#000;"></div>
<div class="a" style="left:0px;top:650px;width:1500px;height:63px;background:#1b1c1e;"></div>
<div class="a" style="left:0px;top:650px;width:1500px;height:1px;background:#252529;"></div>
<div class="a" style="left:0px;top:713px;width:1500px;height:212px;background:#0e0e10;"></div>
<div class="a" style="left:0px;top:925px;width:1500px;height:5px;background:#000;"></div>
<div class="a t j" style="left:23.2px;top:663.46px;font-size:12.8px;color:#7c7c81;letter-spacing:0.25px;line-height:15px;">トラック</div>
<div class="a t " style="left:25.5px;top:681.78px;font-size:16.8px;color:#f2f2f4;letter-spacing:0.13px;line-height:20px;">Synth Percussion</div>
<div class="a" style="left:653.5px;top:659.5px;width:195px;height:44.5px;background:#27272b;border-radius:10px;"></div>
<div class="a" style="left:655px;top:661.5px;width:67px;height:40.5px;background:#434348;border-radius:8.5px;"></div>
<div class="a t j" style="left:537.4px;top:674.66px;font-size:12.8px;color:#e6e6e8;letter-spacing:0.2px;width:300px;text-align:center;line-height:15px;">トラック</div>
<div class="a t " style="left:606px;top:673.51px;font-size:14.4px;color:#f2f2f4;letter-spacing:0.1px;width:300px;text-align:center;line-height:17px;">Sends</div>
<div class="a" style="left:787px;top:669px;width:1px;height:26px;background:#3d3d42;"></div>
<div class="a t j" style="left:668.5px;top:674.93px;font-size:12.6px;color:#f2f2f4;width:300px;text-align:center;line-height:15px;">出力</div>
<div class="a" style="left:1222px;top:661.5px;width:55px;height:40px;background:#27272b;border-radius:8.5px;"></div>
<div class="a t j" style="left:1299px;top:664.46px;font-size:12.8px;color:#8e8e93;letter-spacing:0.3px;line-height:15px;">オートメーション</div>
<div class="a t " style="left:1299.5px;top:682.05px;font-size:16.6px;color:#34c759;letter-spacing:-0.35px;line-height:20px;">Read</div>
<svg width="1500" height="1018" viewBox="0 0 1500 1018" aria-hidden="true"><g transform="translate(1241.0 690.9) rotate(-45) scale(1.0)" fill="#fff"><path d="M0 0 L3.6 -1.55 L20.2 -1.55 L20.2 1.55 L3.6 1.55 Z" stroke="#fff" stroke-width="0.5" stroke-linejoin="round"/><path d="M21.2 -1.8 L23 -1.8 Q24.6 -1.8 24.6 -0.2 L24.6 0.2 Q24.6 1.8 23 1.8 L21.2 1.8 Z"/></g><path d="M1343.6 688.6 L1347.6 684.8 L1351.6 688.6 M1343.6 693.4 L1347.6 697.2 L1351.6 693.4" fill="none" stroke="#5f5f65" stroke-width="1.5" stroke-linecap="round" stroke-linejoin="round"/><circle cx="1452.5" cy="681.4" r="2.25" fill="#fff"/><circle cx="1460.3" cy="681.4" r="2.25" fill="#fff"/><circle cx="1468.1" cy="681.4" r="2.25" fill="#fff"/></svg>
<div class="a t " style="left:-62px;top:843.45px;font-size:14px;color:#a2a2a7;letter-spacing:0.2px;width:300px;text-align:center;line-height:17px;">MIDI FX</div>
<div class="a" style="left:171.5px;top:758px;width:2px;height:124px;background:#323236;border-radius:1px;"></div>
<div class="a" style="left:773.5px;top:758px;width:2px;height:124px;background:#323236;border-radius:1px;"></div>
<div class="a" style="left:183.5px;top:729px;width:579px;height:182.5px;border-radius:9px;background:#c8c8c8;overflow:hidden"><div class="a" style="left:1.5px;top:59.5px;width:576px;height:121.5px;border-radius:0 0 7.5px 7.5px;background:#0f1214"></div></div>
<div class="a" style="left:185px;top:789.5px;width:144.5px;height:59.5px;background:#171b1f;border-radius:2px;"></div>
<div class="a t " style="left:106.75px;top:811.38px;font-size:14.2px;color:#595e63;letter-spacing:0.25px;width:300px;text-align:center;line-height:17px;">Vocals 1</div>
<div class="a" style="left:330.5px;top:789.5px;width:142.5px;height:59.5px;background:#171b1f;border-radius:2px;"></div>
<div class="a t " style="left:251.25px;top:811.38px;font-size:14.2px;color:#595e63;letter-spacing:0.25px;width:300px;text-align:center;line-height:17px;">Vocals 2</div>
<div class="a" style="left:474px;top:789.5px;width:142.5px;height:59.5px;background:#0f2329;border-radius:2px;"></div>
<div class="a t " style="left:394.75px;top:811.38px;font-size:14.2px;color:#3a8a98;letter-spacing:0.25px;width:300px;text-align:center;line-height:17px;">Metal Pipe</div>
<div class="a" style="left:617.5px;top:789.5px;width:142px;height:59.5px;background:#005262;border-radius:2px;"></div>
<div class="a t " style="left:538.2px;top:809.84px;font-size:14.6px;color:#2ccbe8;letter-spacing:0.35px;width:300px;text-align:center;line-height:18px;-webkit-text-stroke:0.45px #2ccbe8;">Garbled</div>
<div class="a" style="left:185px;top:850.0px;width:144.5px;height:59.2px;background:#171b1f;border-radius:2px 2px 2px 7px;"></div>
<div class="a t " style="left:106.75px;top:870.68px;font-size:14.2px;color:#595e63;letter-spacing:0.25px;width:300px;text-align:center;line-height:17px;">Flying</div>
<div class="a" style="left:330.5px;top:850.0px;width:142.5px;height:59.2px;background:#171b1f;border-radius:2px;"></div>
<div class="a t " style="left:251.25px;top:870.68px;font-size:14.2px;color:#595e63;letter-spacing:0.25px;width:300px;text-align:center;line-height:17px;">Thin</div>
<div class="a" style="left:474px;top:850.0px;width:142.5px;height:59.2px;background:#171b1f;border-radius:2px;"></div>
<div class="a t " style="left:394.75px;top:870.68px;font-size:14.2px;color:#595e63;letter-spacing:0.25px;width:300px;text-align:center;line-height:17px;">Warm</div>
<div class="a" style="left:617.5px;top:850.0px;width:142px;height:59.2px;background:#171b1f;border-radius:2px 2px 7px 2px;"></div>
<div class="a t " style="left:538.2px;top:870.68px;font-size:14.2px;color:#595e63;letter-spacing:0.25px;width:300px;text-align:center;line-height:17px;">Pitch Warble</div>
<div class="a" style="left:600.5px;top:790.5px;width:141.5px;height:58px;background:rgba(0,96,116,0.42);border-radius:3px;"></div>
<div class="a t " style="left:239.2px;top:745.27px;font-size:20px;color:#1c1c1e;letter-spacing:0.1px;line-height:24px;-webkit-text-stroke:0.45px #1c1c1e;">Alchemy</div>
<div class="a" style="left:785.5px;top:729px;width:223.5px;height:182.5px;background:#14222f;border-radius:9px;"></div>
<div class="a t " style="left:840.6px;top:745.27px;font-size:20px;color:#e8eaec;letter-spacing:0.05px;line-height:24px;-webkit-text-stroke:0.45px #e8eaec;">Stereo Spread</div>
<div class="a t " style="left:701px;top:802.54px;font-size:14.6px;color:#8f99a3;letter-spacing:0.3px;width:300px;text-align:center;line-height:18px;">Lower Int</div>
<div class="a t " style="left:792.5px;top:802.54px;font-size:14.6px;color:#8f99a3;letter-spacing:0.3px;width:300px;text-align:center;line-height:18px;">Upper Int</div>
<div class="a" style="left:1019px;top:729px;width:223.5px;height:182.5px;background:#c8c8c8;border-radius:9px;"></div>
<div class="a t " style="left:1074.6px;top:745.27px;font-size:20px;color:#1c1c1e;letter-spacing:-0.15px;line-height:24px;-webkit-text-stroke:0.45px #1c1c1e;">Delay Designer</div>
<div class="a t " style="left:935px;top:802.54px;font-size:14.6px;color:#1c1c1e;letter-spacing:0.1px;width:300px;text-align:center;line-height:18px;">Dry</div>
<div class="a t " style="left:1026.5px;top:802.54px;font-size:14.6px;color:#1c1c1e;letter-spacing:0.1px;width:300px;text-align:center;line-height:18px;">Wet</div>
<div class="a" style="left:1252.5px;top:729px;width:260px;height:182.5px;border-radius:9px;background:#14222f"></div>
<div class="a t " style="left:1307.6px;top:745.27px;font-size:20px;color:#e8eaec;letter-spacing:0.45px;line-height:24px;-webkit-text-stroke:0.45px #e8eaec;">Bitcrusher</div>
<div class="a t " style="left:1168.5px;top:802.54px;font-size:14.6px;color:#8f99a3;letter-spacing:0.1px;width:300px;text-align:center;line-height:18px;">Resolution</div>
<div class="a t " style="left:1260px;top:802.54px;font-size:14.6px;color:#8f99a3;letter-spacing:0.1px;width:300px;text-align:center;line-height:18px;">Drive</div>
<div class="a t " style="left:1483.5px;top:802.54px;font-size:14.6px;color:#8f99a3;letter-spacing:0.1px;line-height:18px;">Downsampling</div>
<svg width="1500" height="1018" viewBox="0 0 1500 1018" aria-hidden="true"><path d="M88 811.6 L88 829 M79.3 820.3 L96.7 820.3" stroke="#f0f0f2" stroke-width="2" stroke-linecap="round"/><g fill="none" stroke="#1eb6d2" stroke-width="1.6" stroke-linecap="round" stroke-linejoin="round"><path d="M617 791 L604 791 Q601 791 601 794 L601 807"/><path d="M601 832 L601 845 Q601 848 604 848 L617 848"/><path d="M725.5 791 L738.5 791 Q741.5 791 741.5 794 L741.5 807"/><path d="M741.5 832 L741.5 845 Q741.5 848 738.5 848 L725.5 848"/></g><circle cx="211" cy="757" r="14.2" fill="#23c5ef" fill-opacity="0.22"/><circle cx="211" cy="757" r="12.5" fill="#23c5ef"/><path d="M207.4 752.3 A6.2 6.2 0 1 0 214.6 752.3" fill="none" stroke="#0d2a36" stroke-width="1.9" stroke-linecap="round"/><path d="M211 749.6 L211 756" stroke="#0d2a36" stroke-width="1.9" stroke-linecap="round"/><defs><linearGradient id="kd" x1="0" y1="0" x2="0" y2="1"><stop offset="0" stop-color="#454e5a"/><stop offset="1" stop-color="#2b333e"/></linearGradient><linearGradient id="kl" x1="0" y1="0" x2="0" y2="1"><stop offset="0" stop-color="#ffffff"/><stop offset="0.55" stop-color="#ededed"/><stop offset="1" stop-color="#d2d2d2"/></linearGradient></defs><circle cx="812.8" cy="757" r="14.2" fill="#23c5ef" fill-opacity="0.22"/><circle cx="812.8" cy="757" r="12.5" fill="#23c5ef"/><path d="M809.1999999999999 752.3 A6.2 6.2 0 1 0 816.4 752.3" fill="none" stroke="#0d2a36" stroke-width="1.9" stroke-linecap="round"/><path d="M812.8 749.6 L812.8 756" stroke="#0d2a36" stroke-width="1.9" stroke-linecap="round"/><path d="M836.09 878.30 A26 26 0 1 1 865.91 878.30" fill="none" stroke="#1d2936" stroke-width="4.2" stroke-linecap="round" stroke-opacity="1"/><path d="M851.00 831.00 A26 26 0 0 1 865.16 878.81" fill="none" stroke="#2cc6f2" stroke-width="3.2" stroke-linecap="round" stroke-opacity="1"/><circle cx="851" cy="858.5" r="20.5" fill="#0d1620" fill-opacity="0.55"/><circle cx="851" cy="857" r="19.6" fill="url(#kd)"/><path d="M856.75 866.96 L860.25 873.02" stroke="#2cc6f2" stroke-width="1.4" stroke-linecap="round"/><path d="M927.59 878.30 A26 26 0 1 1 957.41 878.30" fill="none" stroke="#1d2936" stroke-width="4.2" stroke-linecap="round" stroke-opacity="1"/><path d="M942.50 831.00 A26 26 0 0 1 956.66 878.81" fill="none" stroke="#2cc6f2" stroke-width="3.2" stroke-linecap="round" stroke-opacity="1"/><circle cx="942.5" cy="858.5" r="20.5" fill="#0d1620" fill-opacity="0.55"/><circle cx="942.5" cy="857" r="19.6" fill="url(#kd)"/><path d="M948.25 866.96 L951.75 873.02" stroke="#2cc6f2" stroke-width="1.4" stroke-linecap="round"/><circle cx="1046.5" cy="757" r="14.2" fill="#f0522e" fill-opacity="0.22"/><circle cx="1046.5" cy="757" r="12.5" fill="#f0522e"/><path d="M1042.9 752.3 A6.2 6.2 0 1 0 1050.1 752.3" fill="none" stroke="#3a140c" stroke-width="1.9" stroke-linecap="round"/><path d="M1046.5 749.6 L1046.5 756" stroke="#3a140c" stroke-width="1.9" stroke-linecap="round"/><path d="M1070.09 878.30 A26 26 0 1 1 1099.91 878.30" fill="none" stroke="#8e8e90" stroke-width="4.2" stroke-linecap="round"/><path d="M1070.09 878.30 A26 26 0 1 1 1107.96 869.21" fill="none" stroke="#f0552f" stroke-width="4.2" stroke-linecap="round"/><circle cx="1085" cy="859.5" r="20.5" fill="#7d7d7f" fill-opacity="0.55"/><circle cx="1085" cy="857" r="21" fill="#a9a9ab"/><circle cx="1085" cy="857" r="19.8" fill="url(#kl)"/><path d="M1094.52 861.44 L1101.77 864.82" stroke="#f0552f" stroke-width="1.4" stroke-linecap="round"/><path d="M1161.59 878.30 A26 26 0 1 1 1191.41 878.30" fill="none" stroke="#8e8e90" stroke-width="4.2" stroke-linecap="round"/><path d="M1161.59 878.30 A26 26 0 0 1 1151.39 850.27" fill="none" stroke="#f0552f" stroke-width="4.2" stroke-linecap="round"/><circle cx="1176.5" cy="859.5" r="20.5" fill="#7d7d7f" fill-opacity="0.55"/><circle cx="1176.5" cy="857" r="21" fill="#a9a9ab"/><circle cx="1176.5" cy="857" r="19.8" fill="url(#kl)"/><path d="M1166.36 854.28 L1158.63 852.21" stroke="#f0552f" stroke-width="1.4" stroke-linecap="round"/><circle cx="1279.8" cy="757" r="14.2" fill="#23c5ef" fill-opacity="0.22"/><circle cx="1279.8" cy="757" r="12.5" fill="#23c5ef"/><path d="M1276.2 752.3 A6.2 6.2 0 1 0 1283.3999999999999 752.3" fill="none" stroke="#0d2a36" stroke-width="1.9" stroke-linecap="round"/><path d="M1279.8 749.6 L1279.8 756" stroke="#0d2a36" stroke-width="1.9" stroke-linecap="round"/><path d="M1303.59 878.30 A26 26 0 1 1 1333.41 878.30" fill="none" stroke="#1d2936" stroke-width="4.2" stroke-linecap="round" stroke-opacity="1"/><path d="M1303.59 878.30 A26 26 0 1 1 1341.46 869.21" fill="none" stroke="#2cc6f2" stroke-width="3.2" stroke-linecap="round" stroke-opacity="1"/><circle cx="1318.5" cy="858.5" r="20.5" fill="#0d1620" fill-opacity="0.55"/><circle cx="1318.5" cy="857" r="19.6" fill="url(#kd)"/><path d="M1328.65 862.40 L1334.83 865.69" stroke="#2cc6f2" stroke-width="1.4" stroke-linecap="round"/><path d="M1395.09 878.30 A26 26 0 1 1 1424.91 878.30" fill="none" stroke="#1d2936" stroke-width="4.2" stroke-linecap="round" stroke-opacity="1"/><path d="M1395.09 878.30 A26 26 0 0 1 1384.25 860.62" fill="none" stroke="#2cc6f2" stroke-width="3.2" stroke-linecap="round" stroke-opacity="1"/><circle cx="1410" cy="858.5" r="20.5" fill="#0d1620" fill-opacity="0.55"/><circle cx="1410" cy="857" r="19.6" fill="url(#kd)"/><path d="M1398.61 858.60 L1391.68 859.57" stroke="#2cc6f2" stroke-width="1.4" stroke-linecap="round"/><path d="M1486.59 878.30 A26 26 0 1 1 1516.41 878.30" fill="none" stroke="#1d2936" stroke-width="4.2" stroke-linecap="round" stroke-opacity="1"/><path d="M1486.59 878.30 A26 26 0 0 1 1475.75 860.62" fill="none" stroke="#2cc6f2" stroke-width="3.2" stroke-linecap="round" stroke-opacity="1"/><circle cx="1501.5" cy="858.5" r="20.5" fill="#0d1620" fill-opacity="0.55"/><circle cx="1501.5" cy="857" r="19.6" fill="url(#kd)"/><path d="M1490.11 858.60 L1483.18 859.57" stroke="#2cc6f2" stroke-width="1.4" stroke-linecap="round"/></svg>
<div class="a" style="left:0px;top:930px;width:1500px;height:88px;background:#201f24;"></div>
<div class="a" style="left:0px;top:930px;width:1500px;height:1px;background:#2d2d31;"></div>
<div class="a" style="left:722px;top:941.5px;width:56px;height:40px;background:#a9a9ae;border-radius:8.5px;"></div>
<svg width="1500" height="1018" viewBox="0 0 1500 1018" aria-hidden="true"><g fill="none" stroke="#fff" stroke-width="1.8" stroke-linejoin="round" stroke-linecap="round"><path d="M28 961.2 L32.8 954.6 Q33.6 953.6 34.8 953.6 L44.2 953.6 Q45.4 953.6 46.2 954.6 L51 961.2"/><path d="M28 961.2 L35.4 961.2 Q36 964.6 39.5 964.6 Q43 964.6 43.6 961.2 L51 961.2 L51 967.6 Q51 970.4 48.2 970.4 L30.8 970.4 Q28 970.4 28 967.6 Z"/><path d="M34.4 956.4 L44.6 956.4 M33.6 958.8 L45.4 958.8" stroke-width="1.3"/></g><circle cx="97.8" cy="961.6" r="10" fill="none" stroke="#fff" stroke-width="1.8"/><circle cx="97.8" cy="956.6" r="1.4" fill="#fff"/><path d="M96 959.8 L98.4 959.8 L98.4 966.4 M95.6 966.6 L100.6 966.6" fill="none" stroke="#fff" stroke-width="1.6" stroke-linecap="round" stroke-linejoin="round"/><g fill="none" stroke="#fff" stroke-width="1.8" stroke-linejoin="round" stroke-linecap="round"><rect x="143.6" y="952.6" width="23.8" height="18.4" rx="2.6"/><path d="M152.6 952.8 L152.6 970.8"/><path d="M148 957 L148 967" stroke-width="1.4"/></g><circle cx="148" cy="959.6" r="1.7" fill="#201f24" stroke="#fff" stroke-width="1.2"/><g transform="translate(683.6999999999999 970.9) rotate(-45) scale(1.0)" fill="#fff"><path d="M0 0 L3.6 -1.55 L20.2 -1.55 L20.2 1.55 L3.6 1.55 Z" stroke="#fff" stroke-width="0.5" stroke-linejoin="round"/><path d="M21.2 -1.8 L23 -1.8 Q24.6 -1.8 24.6 -0.2 L24.6 0.2 Q24.6 1.8 23 1.8 L21.2 1.8 Z"/></g><g fill="none" stroke="#1c1c1e" stroke-width="1.7" stroke-linecap="round"><circle cx="750" cy="962.6" r="6.6"/><path d="M750 957.4 L750 962.4"/></g><g fill="#1c1c1e"><circle cx="750.0" cy="951.4" r="1.15"/><circle cx="757.9" cy="954.7" r="1.15"/><circle cx="761.2" cy="962.6" r="1.15"/><circle cx="757.9" cy="970.5" r="1.15"/><circle cx="742.1" cy="970.5" r="1.15"/><circle cx="738.8" cy="962.6" r="1.15"/><circle cx="742.1" cy="954.7" r="1.15"/></g><g fill="none" stroke="#fff" stroke-width="1.6" stroke-linecap="round"><path d="M801 953 L801 962.2 M801 967.4 L801 971.6"/><circle cx="801" cy="964.8" r="2.3"/><path d="M808.2 953 L808.2 955.4 M808.2 960.6 L808.2 971.6"/><circle cx="808.2" cy="958" r="2.3"/><path d="M815.4 953 L815.4 962.2 M815.4 967.4 L815.4 971.6"/><circle cx="815.4" cy="964.8" r="2.3"/></g><rect x="1447" y="952.2" width="25" height="19.8" rx="3" fill="#fff"/><g fill="#201f24"><rect x="1452.2" y="952.2" width="3.4" height="11.4"/><rect x="1457.9" y="952.2" width="3.4" height="11.4"/><rect x="1463.6" y="952.2" width="3.4" height="11.4"/><rect x="1453.5" y="963.4" width="0.9" height="8.6"/><rect x="1459.2" y="963.4" width="0.9" height="8.6"/><rect x="1464.9" y="963.4" width="0.9" height="8.6"/></g></svg>
<div class="a" style="left:551.5px;top:1001.5px;width:396px;height:7.5px;background:#4b4b50;border-radius:3.75px;"></div>
<div class="a" style="left:1498px;top:1px;width:1px;height:1016px;background:rgba(255,255,255,0.3);"></div>
<div class="a" style="left:1px;top:1016px;width:1498px;height:1px;background:rgba(255,255,255,0.3);"></div>
<div class="a" style="left:0;top:0;width:1500px;height:1018px;border:1px solid #fff;pointer-events:none"></div>
</div>
</body></html>
